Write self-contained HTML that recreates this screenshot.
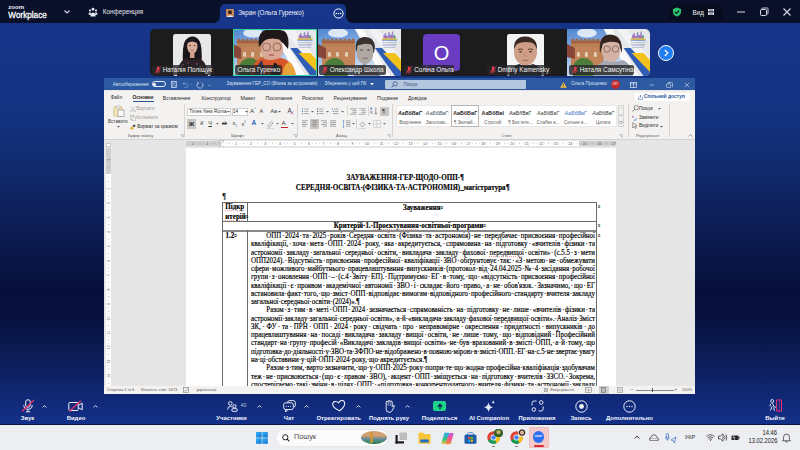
<!DOCTYPE html>
<html><head><meta charset="utf-8">
<style>
*{margin:0;padding:0;box-sizing:border-box}
html,body{width:800px;height:450px;overflow:hidden;background:#15338a;font-family:"Liberation Sans",sans-serif}
.a{position:absolute}
.t{position:absolute;white-space:nowrap;line-height:1}
</style></head><body>

<div class="a" style="left:0px;top:0px;width:800px;height:450px;background:linear-gradient(#16358a 23px,#143382 110px,#102868 180px,#0b1a4e 240px,#07103a 290px,#081240 320px,#0c1d58 360px,#13308a 424px);"></div>
<div class="a" style="left:0px;top:0px;width:800px;height:23px;background:#0a1029;"></div>
<div class="t" style="left:8.2px;top:4.3px;font-size:6.1px;color:#eef1f6;font-weight:bold;font-family:'Liberation Sans';">zoom</div>
<div class="t" style="left:8.3px;top:11.7px;font-size:8.2px;color:#fafbfd;font-weight:normal;font-family:'Liberation Sans';-webkit-text-stroke:0.3px #fafbfd">Workplace</div>
<svg class="a" style="left:63px;top:9px;" width="8" height="6" viewBox="0 0 8 6"><path d="M1.5 1.5 L4 4 L6.5 1.5" stroke="#cfd6e6" stroke-width="1.1" fill="none"/></svg>
<svg class="a" style="left:88px;top:7px;" width="10" height="10" viewBox="0 0 10 10"><g fill="#e8ecf5"><circle cx="5" cy="2.2" r="1.4"/><circle cx="2" cy="3.5" r="1.1"/><circle cx="8" cy="3.5" r="1.1"/><path d="M2.5 9.5 Q2 6 5 5.5 Q8 6 7.5 9.5Z"/><path d="M0.3 7.5 Q0.5 5 2.5 5 L3 8Z"/><path d="M9.7 7.5 Q9.5 5 7.5 5 L7 8Z"/></g></svg>
<div class="t" style="left:102.8px;top:9.3px;font-size:6.3px;color:#e6e9f2;font-weight:normal;font-family:'Liberation Sans';">Конференция</div>
<div class="a" style="left:220px;top:4px;width:126px;height:19px;background:#17368b;border-radius:5px 5px 0 0"></div>
<div class="a" style="left:214px;top:17px;width:6px;height:6px;background:radial-gradient(circle at 0 0,#0a1029 5.5px,#17368b 6px)"></div>
<div class="a" style="left:346px;top:17px;width:6px;height:6px;background:radial-gradient(circle at 100% 0,#0a1029 5.5px,#17368b 6px)"></div>
<svg class="a" style="left:226px;top:9px;" width="8" height="8" viewBox="0 0 8 8"><rect width="8" height="8" rx="1" fill="#c98a5a"/><circle cx="4" cy="3.2" r="2" fill="#3a2418"/><path d="M0.5 8 Q4 4.5 7.5 8Z" fill="#f2efe9"/></svg>
<div class="t" style="left:238px;top:9.5px;font-size:6.3px;color:#f0f3fa;font-weight:normal;font-family:'Liberation Sans';">Экран (Ольга Гуренко)</div>
<svg class="a" style="left:333px;top:8px;" width="11" height="11" viewBox="0 0 11 11"><circle cx="5.5" cy="5.5" r="4.6" stroke="#fff" stroke-width="1" fill="none"/><circle cx="3.3" cy="5.5" r="0.75" fill="#fff"/><circle cx="5.5" cy="5.5" r="0.75" fill="#fff"/><circle cx="7.7" cy="5.5" r="0.75" fill="#fff"/></svg>
<div class="a" style="left:669px;top:5px;width:54px;height:15px;background:#070c1e;border-radius:3px"></div>
<svg class="a" style="left:672px;top:6.5px;" width="10" height="10" viewBox="0 0 10 10"><path d="M5 0.5 L9 2 V5 Q9 8.3 5 9.6 Q1 8.3 1 5 V2Z" fill="#27c46a"/><path d="M3 5 L4.5 6.5 L7.2 3.6" stroke="#0a1029" stroke-width="1.2" fill="none"/></svg>
<div class="t" style="left:692.5px;top:9.5px;font-size:6.3px;color:#eef1f7;font-weight:normal;font-family:'Liberation Sans';">Вид</div>
<svg class="a" style="left:708px;top:9px;" width="6" height="6" viewBox="0 0 6 6"><g fill="#e0e4ee"><rect x="0" y="0" width="6" height="2.4"/><rect x="0" y="3.2" width="6" height="2.8"/></g><g stroke="#070c1e" stroke-width="0.6"><line x1="2" y1="0" x2="2" y2="6"/><line x1="4" y1="0" x2="4" y2="6"/></g></svg>
<svg class="a" style="left:736px;top:8px;" width="10" height="8" viewBox="0 0 10 8"><line x1="1" y1="4" x2="9" y2="4" stroke="#d8dce6" stroke-width="1"/></svg>
<svg class="a" style="left:759px;top:7px;" width="10" height="10" viewBox="0 0 10 10"><rect x="1.5" y="2.5" width="6" height="6" rx="1" stroke="#d8dce6" fill="none" stroke-width="1"/><path d="M3 2.5 V1.5 Q3 1 3.5 1 H8.5 Q9 1 9 1.5 V6.5 Q9 7 8.5 7 H7.5" stroke="#d8dce6" fill="none" stroke-width="0.9"/></svg>
<svg class="a" style="left:782px;top:7px;" width="10" height="10" viewBox="0 0 10 10"><path d="M1.5 1.5 L8.5 8.5 M8.5 1.5 L1.5 8.5" stroke="#d8dce6" stroke-width="1.1"/></svg>
<div class="a" style="left:150px;top:29px;width:500px;height:47px;background:#1c1c1c;border-radius:5px;overflow:hidden">
<svg class="a" style="left:23px;top:4.7px" width="38" height="42" viewBox="0 0 38 42"><rect width="38" height="42" rx="2.5" fill="#e8e8e8"/><path d="M10 30 Q9 12 12 7 Q15 2.5 19.5 2.5 Q24 2.5 26.5 7 Q29.5 12 28.5 30Z" fill="#19151a"/><ellipse cx="19.3" cy="12.5" rx="5.2" ry="7" fill="#d9ad9a"/><path d="M14 7 Q19 3.5 24.5 7 L24 9 Q19 6 14.5 9Z" fill="#19151a"/><rect x="17" y="18" width="4.5" height="6" fill="#cf9f8c"/><ellipse cx="17" cy="11.5" rx="1" ry="0.5" fill="#4a3030"/><ellipse cx="21.5" cy="11.5" rx="1" ry="0.5" fill="#4a3030"/><path d="M17.5 16 Q19.3 16.8 21 16" stroke="#b05a5a" stroke-width="0.7" fill="none"/><path d="M4 42 Q5 27 13 24.5 Q19.5 27 26 24.5 Q34 27 35 42Z" fill="#2a2026"/><g fill="#7a5a5e" opacity="0.8"><circle cx="10" cy="31" r="0.9"/><circle cx="15" cy="29" r="0.8"/><circle cx="24" cy="30" r="0.9"/><circle cx="29" cy="33" r="0.8"/><circle cx="12" cy="36" r="0.8"/><circle cx="20" cy="34" r="0.9"/><circle cx="27" cy="38" r="0.8"/><circle cx="17" cy="39" r="0.8"/></g></svg>
<div class="a" style="left:1.5px;top:36.2px;width:62.5px;height:9.6px;background:rgba(38,38,40,.8);border-radius:2px"></div>
<svg class="a" style="left:3.7px;top:37.3px" width="8" height="8" viewBox="0 0 8 8"><rect x="2.9" y="0.6" width="2.4" height="4.2" rx="1.2" fill="#e23c4c"/><path d="M1.9 3.8 Q1.9 6.1 4.1 6.1 Q6.2 6.1 6.2 3.8 M4.1 6.1 V7.5" stroke="#e23c4c" stroke-width="0.8" fill="none"/><line x1="1.2" y1="7.4" x2="6.8" y2="0.6" stroke="#e23c4c" stroke-width="0.9"/></svg>
<div class="t" style="left:12.7px;top:38.1px;font-size:6.4px;color:#f4f4f4">Наталія Поліщук</div>
<svg class="a" style="left:83px;top:0" width="84" height="47" viewBox="0 0 83.5 47" preserveAspectRatio="none"><defs><linearGradient id="sky83" x1="0" y1="0" x2="0.3" y2="1"><stop offset="0" stop-color="#4f86d0"/><stop offset="0.5" stop-color="#8db2e2"/><stop offset="1" stop-color="#d8e4f2"/></linearGradient></defs><rect width="83.5" height="47" fill="#e6e7ea"/><path d="M50 0 L60 0 L83.5 30 L83.5 43Z" fill="#f2f2f4"/><path d="M0 0 L37 0 L64 47 L0 47Z" fill="url(#sky83)"/><ellipse cx="20" cy="4" rx="10" ry="4.5" fill="#f2f6fb" opacity="0.85"/><path d="M37 0 L45 0 L72 47 L64 47Z" fill="#fbfbfb"/><rect x="4" y="14" width="33" height="24" fill="#c08458"/><rect x="4" y="11.5" width="33" height="3" fill="#a4623e"/><rect x="4.6" y="9.8" width="2.4" height="2" fill="#a4623e"/><rect x="8.8" y="9.8" width="2.4" height="2" fill="#a4623e"/><rect x="13.0" y="9.8" width="2.4" height="2" fill="#a4623e"/><rect x="17.200000000000003" y="9.8" width="2.4" height="2" fill="#a4623e"/><rect x="21.4" y="9.8" width="2.4" height="2" fill="#a4623e"/><rect x="25.6" y="9.8" width="2.4" height="2" fill="#a4623e"/><rect x="29.800000000000004" y="9.8" width="2.4" height="2" fill="#a4623e"/><rect x="34.0" y="9.8" width="2.4" height="2" fill="#a4623e"/><rect x="4" y="16" width="33" height="1.2" fill="#a87a4c" opacity="0.6"/><rect x="10" y="23" width="3" height="5" rx="1.4" fill="#e4d0bc"/><rect x="18" y="23" width="3" height="5" rx="1.4" fill="#e4d0bc"/><rect x="27" y="23" width="3" height="5" rx="1.4" fill="#e4d0bc"/><path d="M0 15 L8 19 L8 30 L0 28Z" fill="#86463a"/><path d="M6 47 Q4 34 12 30 Q20 27 26 34 L30 47Z" fill="#4e7c39"/><path d="M65 9.5 L65.5 6 L66.5 6 L67 4 L68 4 L68.5 7 L70 7 L70.5 3 L71.5 3 L72 6 L73.5 6 L74 2.5 L75 2.5 L75.5 7 L77 7 L77.5 9.5Z" fill="#9a86c8"/><path d="M66.5 9.5 L67 7 L68 7 L68.5 9.5Z M72.5 9.5 L73 7.5 L74 7.5 L74.5 9.5Z" fill="#d05a8a"/><path d="M75.5 9.5 L76 6 L77 6 L77.5 9.5Z" fill="#5aa06a"/><rect x="64" y="9.5" width="15" height="1.3" fill="#f1c31e"/><rect x="64" y="10.8" width="15" height="0.7" fill="#2f5cb5"/><rect x="64.0" y="13.5" width="15.0" height="0.6" fill="#7d90bb" opacity="0.75"/><rect x="64.5" y="15.0" width="14.0" height="0.6" fill="#7d90bb" opacity="0.75"/><rect x="65.0" y="16.5" width="13.0" height="0.6" fill="#7d90bb" opacity="0.75"/><rect x="65.5" y="18.0" width="12.0" height="0.6" fill="#7d90bb" opacity="0.75"/><path d="M57 19 L64 19 L83.5 40 L83.5 47 L77 47Z" fill="#2f5cb5"/><path d="M65 24 L77 24 L83.5 31 L83.5 43Z" fill="#f2c11c"/></svg>
<svg class="a" style="left:100px;top:0" width="50" height="47" viewBox="0 0 50 47"><path d="M9 18 Q7 3 16 1 Q26 -1 34 2 Q40 6 38 20 L33 14 Q24 8 14 12Z" fill="#1f1718"/><ellipse cx="22" cy="20" rx="11" ry="13" fill="#d8a895"/><path d="M11 11 Q16 4 26 5 Q34 6 36 13 Q27 8 18 10 Q14 11 11 15Z" fill="#1f1718"/><circle cx="16.5" cy="18" r="4" fill="none" stroke="#7a5a50" stroke-width="0.8"/><circle cx="27" cy="18" r="4" fill="none" stroke="#7a5a50" stroke-width="0.8"/><ellipse cx="21.5" cy="26" rx="3" ry="1" fill="#b86c6a"/><path d="M0 47 Q2 32 12 29 Q20 33 30 29 Q42 30 46 47Z" fill="#d9552a"/><path d="M4 47 Q6 36 12 31 L16 47Z" fill="#3c3552"/><path d="M20 47 L24 34 Q28 32 30 47Z" fill="#171717"/><path d="M32 47 Q34 33 40 33 Q45 38 46 47Z" fill="#e9a13a"/></svg>
<div class="a" style="left:83px;top:0;width:84px;height:47px;border:1.3px solid #35d39b"></div>
<div class="a" style="left:85px;top:36.2px;width:47px;height:9.6px;background:rgba(38,38,40,.8);border-radius:2px"></div>
<div class="t" style="left:87.5px;top:38.1px;font-size:6.4px;color:#f4f4f4">Ольга Гуренко</div>
<svg class="a" style="left:167.5px;top:0" width="83.5" height="47" viewBox="0 0 83.5 47" preserveAspectRatio="none"><defs><linearGradient id="sky167" x1="0" y1="0" x2="0.3" y2="1"><stop offset="0" stop-color="#4f86d0"/><stop offset="0.5" stop-color="#8db2e2"/><stop offset="1" stop-color="#d8e4f2"/></linearGradient></defs><rect width="83.5" height="47" fill="#e6e7ea"/><path d="M50 0 L60 0 L83.5 30 L83.5 43Z" fill="#f2f2f4"/><path d="M0 0 L37 0 L64 47 L0 47Z" fill="url(#sky167)"/><ellipse cx="20" cy="4" rx="10" ry="4.5" fill="#f2f6fb" opacity="0.85"/><path d="M37 0 L45 0 L72 47 L64 47Z" fill="#fbfbfb"/><rect x="4" y="14" width="33" height="24" fill="#c08458"/><rect x="4" y="11.5" width="33" height="3" fill="#a4623e"/><rect x="4.6" y="9.8" width="2.4" height="2" fill="#a4623e"/><rect x="8.8" y="9.8" width="2.4" height="2" fill="#a4623e"/><rect x="13.0" y="9.8" width="2.4" height="2" fill="#a4623e"/><rect x="17.200000000000003" y="9.8" width="2.4" height="2" fill="#a4623e"/><rect x="21.4" y="9.8" width="2.4" height="2" fill="#a4623e"/><rect x="25.6" y="9.8" width="2.4" height="2" fill="#a4623e"/><rect x="29.800000000000004" y="9.8" width="2.4" height="2" fill="#a4623e"/><rect x="34.0" y="9.8" width="2.4" height="2" fill="#a4623e"/><rect x="4" y="16" width="33" height="1.2" fill="#a87a4c" opacity="0.6"/><rect x="10" y="23" width="3" height="5" rx="1.4" fill="#e4d0bc"/><rect x="18" y="23" width="3" height="5" rx="1.4" fill="#e4d0bc"/><rect x="27" y="23" width="3" height="5" rx="1.4" fill="#e4d0bc"/><path d="M0 15 L8 19 L8 30 L0 28Z" fill="#86463a"/><path d="M6 47 Q4 34 12 30 Q20 27 26 34 L30 47Z" fill="#4e7c39"/><path d="M65 9.5 L65.5 6 L66.5 6 L67 4 L68 4 L68.5 7 L70 7 L70.5 3 L71.5 3 L72 6 L73.5 6 L74 2.5 L75 2.5 L75.5 7 L77 7 L77.5 9.5Z" fill="#9a86c8"/><path d="M66.5 9.5 L67 7 L68 7 L68.5 9.5Z M72.5 9.5 L73 7.5 L74 7.5 L74.5 9.5Z" fill="#d05a8a"/><path d="M75.5 9.5 L76 6 L77 6 L77.5 9.5Z" fill="#5aa06a"/><rect x="64" y="9.5" width="15" height="1.3" fill="#f1c31e"/><rect x="64" y="10.8" width="15" height="0.7" fill="#2f5cb5"/><rect x="64.0" y="13.5" width="15.0" height="0.6" fill="#7d90bb" opacity="0.75"/><rect x="64.5" y="15.0" width="14.0" height="0.6" fill="#7d90bb" opacity="0.75"/><rect x="65.0" y="16.5" width="13.0" height="0.6" fill="#7d90bb" opacity="0.75"/><rect x="65.5" y="18.0" width="12.0" height="0.6" fill="#7d90bb" opacity="0.75"/><path d="M57 19 L64 19 L83.5 40 L83.5 47 L77 47Z" fill="#2f5cb5"/><path d="M65 24 L77 24 L83.5 31 L83.5 43Z" fill="#f2c11c"/></svg>
<svg class="a" style="left:200px;top:0" width="32" height="47" viewBox="0 0 32 47"><path d="M4 47 Q5 38 14 35 Q24 37 30 47Z" fill="#8a8a8c"/><path d="M6 22 Q4 9 14 8 Q24 7 25 18 L24 24Z" fill="#3a3230"/><ellipse cx="15" cy="23" rx="8.5" ry="12" fill="#aea7a2"/><path d="M7 16 Q10 9 16 9.5 Q23 10 24 17 Q18 13 10 16Z" fill="#3a3230"/><ellipse cx="11.5" cy="21" rx="1.5" ry="0.7" fill="#5a5250"/><ellipse cx="18.5" cy="21" rx="1.5" ry="0.7" fill="#5a5250"/><path d="M12.5 29 Q15 30 17.5 29" stroke="#6a5a58" stroke-width="0.8" fill="none"/></svg>
<div class="a" style="left:168.5px;top:36.2px;width:67px;height:9.6px;background:rgba(38,38,40,.8);border-radius:2px"></div>
<svg class="a" style="left:170.7px;top:37.3px" width="8" height="8" viewBox="0 0 8 8"><rect x="2.9" y="0.6" width="2.4" height="4.2" rx="1.2" fill="#e23c4c"/><path d="M1.9 3.8 Q1.9 6.1 4.1 6.1 Q6.2 6.1 6.2 3.8 M4.1 6.1 V7.5" stroke="#e23c4c" stroke-width="0.8" fill="none"/><line x1="1.2" y1="7.4" x2="6.8" y2="0.6" stroke="#e23c4c" stroke-width="0.9"/></svg>
<div class="t" style="left:179.7px;top:38.1px;font-size:6.4px;color:#f4f4f4">Олександр Школа</div>
<div class="a" style="left:273px;top:5px;width:37px;height:37px;background:#6a3cc2;border-radius:4px"></div>
<div class="t" style="left:279px;top:13.5px;font-size:20px;color:#fff;width:25px;text-align:center">O</div>
<div class="a" style="left:253px;top:36.2px;width:51px;height:9.6px;background:rgba(38,38,40,.8);border-radius:2px"></div>
<svg class="a" style="left:255.2px;top:37.3px" width="8" height="8" viewBox="0 0 8 8"><rect x="2.9" y="0.6" width="2.4" height="4.2" rx="1.2" fill="#e23c4c"/><path d="M1.9 3.8 Q1.9 6.1 4.1 6.1 Q6.2 6.1 6.2 3.8 M4.1 6.1 V7.5" stroke="#e23c4c" stroke-width="0.8" fill="none"/><line x1="1.2" y1="7.4" x2="6.8" y2="0.6" stroke="#e23c4c" stroke-width="0.9"/></svg>
<div class="t" style="left:264.2px;top:38.1px;font-size:6.4px;color:#f4f4f4">Соліна Ольга</div>
<svg class="a" style="left:356.5px;top:4.7px" width="37.3" height="42" viewBox="0 0 37.3 42"><rect width="37.3" height="42" rx="2.5" fill="#f4f4f4"/><path d="M2 42 Q4 32 12 30 Q19 33 26 30 Q34 32 35 42Z" fill="#2c2e34"/><ellipse cx="18.5" cy="18" rx="11.5" ry="13.5" fill="#cf9e86"/><path d="M7 16 Q6 3 18 2.5 Q31 3 30 16 Q29 10 24 8.5 Q16 7 10 10 Q8 12 7 16Z" fill="#3a2a22"/><path d="M11 15.5 Q13.5 14.5 16 15.5 M21 15.5 Q23.5 14.5 26 15.5" stroke="#4a3028" stroke-width="0.9" fill="none"/><ellipse cx="13.5" cy="17.8" rx="1.6" ry="0.8" fill="#5a3a30"/><ellipse cx="23.5" cy="17.8" rx="1.6" ry="0.8" fill="#5a3a30"/><path d="M18.5 18 L17.5 22.5 L19.5 22.5" stroke="#b07a64" stroke-width="0.6" fill="none"/><path d="M15.5 26 Q18.5 27 21.5 26" stroke="#9a5a50" stroke-width="0.9" fill="none"/></svg>
<div class="a" style="left:336.5px;top:36.2px;width:64px;height:9.6px;background:rgba(38,38,40,.8);border-radius:2px"></div>
<svg class="a" style="left:338.7px;top:37.3px" width="8" height="8" viewBox="0 0 8 8"><rect x="2.9" y="0.6" width="2.4" height="4.2" rx="1.2" fill="#e23c4c"/><path d="M1.9 3.8 Q1.9 6.1 4.1 6.1 Q6.2 6.1 6.2 3.8 M4.1 6.1 V7.5" stroke="#e23c4c" stroke-width="0.8" fill="none"/><line x1="1.2" y1="7.4" x2="6.8" y2="0.6" stroke="#e23c4c" stroke-width="0.9"/></svg>
<div class="t" style="left:347.7px;top:38.1px;font-size:6.4px;color:#f4f4f4">Dmitriy Kamensky</div>
<svg class="a" style="left:417px;top:0" width="83" height="47" viewBox="0 0 83.5 47" preserveAspectRatio="none"><defs><linearGradient id="sky417" x1="0" y1="0" x2="0.3" y2="1"><stop offset="0" stop-color="#4f86d0"/><stop offset="0.5" stop-color="#8db2e2"/><stop offset="1" stop-color="#d8e4f2"/></linearGradient></defs><rect width="83.5" height="47" fill="#e6e7ea"/><path d="M50 0 L60 0 L83.5 30 L83.5 43Z" fill="#f2f2f4"/><path d="M0 0 L37 0 L64 47 L0 47Z" fill="url(#sky417)"/><ellipse cx="20" cy="4" rx="10" ry="4.5" fill="#f2f6fb" opacity="0.85"/><path d="M37 0 L45 0 L72 47 L64 47Z" fill="#fbfbfb"/><rect x="4" y="14" width="33" height="24" fill="#c08458"/><rect x="4" y="11.5" width="33" height="3" fill="#a4623e"/><rect x="4.6" y="9.8" width="2.4" height="2" fill="#a4623e"/><rect x="8.8" y="9.8" width="2.4" height="2" fill="#a4623e"/><rect x="13.0" y="9.8" width="2.4" height="2" fill="#a4623e"/><rect x="17.200000000000003" y="9.8" width="2.4" height="2" fill="#a4623e"/><rect x="21.4" y="9.8" width="2.4" height="2" fill="#a4623e"/><rect x="25.6" y="9.8" width="2.4" height="2" fill="#a4623e"/><rect x="29.800000000000004" y="9.8" width="2.4" height="2" fill="#a4623e"/><rect x="34.0" y="9.8" width="2.4" height="2" fill="#a4623e"/><rect x="4" y="16" width="33" height="1.2" fill="#a87a4c" opacity="0.6"/><rect x="10" y="23" width="3" height="5" rx="1.4" fill="#e4d0bc"/><rect x="18" y="23" width="3" height="5" rx="1.4" fill="#e4d0bc"/><rect x="27" y="23" width="3" height="5" rx="1.4" fill="#e4d0bc"/><path d="M0 15 L8 19 L8 30 L0 28Z" fill="#86463a"/><path d="M6 47 Q4 34 12 30 Q20 27 26 34 L30 47Z" fill="#4e7c39"/><path d="M65 9.5 L65.5 6 L66.5 6 L67 4 L68 4 L68.5 7 L70 7 L70.5 3 L71.5 3 L72 6 L73.5 6 L74 2.5 L75 2.5 L75.5 7 L77 7 L77.5 9.5Z" fill="#9a86c8"/><path d="M66.5 9.5 L67 7 L68 7 L68.5 9.5Z M72.5 9.5 L73 7.5 L74 7.5 L74.5 9.5Z" fill="#d05a8a"/><path d="M75.5 9.5 L76 6 L77 6 L77.5 9.5Z" fill="#5aa06a"/><rect x="64" y="9.5" width="15" height="1.3" fill="#f1c31e"/><rect x="64" y="10.8" width="15" height="0.7" fill="#2f5cb5"/><rect x="64.0" y="13.5" width="15.0" height="0.6" fill="#7d90bb" opacity="0.75"/><rect x="64.5" y="15.0" width="14.0" height="0.6" fill="#7d90bb" opacity="0.75"/><rect x="65.0" y="16.5" width="13.0" height="0.6" fill="#7d90bb" opacity="0.75"/><rect x="65.5" y="18.0" width="12.0" height="0.6" fill="#7d90bb" opacity="0.75"/><path d="M57 19 L64 19 L83.5 40 L83.5 47 L77 47Z" fill="#2f5cb5"/><path d="M65 24 L77 24 L83.5 31 L83.5 43Z" fill="#f2c11c"/></svg>
<svg class="a" style="left:443px;top:0" width="40" height="47" viewBox="0 0 40 47"><path d="M0 47 Q2 34 14 31 Q22 34 30 31 Q38 34 40 47Z" fill="#a4a8b4"/><path d="M7 24 Q5 6 17 5.5 Q30 6 29 24 L26 16 Q18 10 10 16Z" fill="#33241f"/><ellipse cx="18" cy="21" rx="9.5" ry="12" fill="#d4b2a4"/><path d="M8.5 15 Q12 7 19 7.5 Q27 8 28 15 Q20 11 12 14Z" fill="#33241f"/><circle cx="14" cy="20" r="3.2" fill="none" stroke="#6a5550" stroke-width="0.7"/><circle cx="22.5" cy="20" r="3.2" fill="none" stroke="#6a5550" stroke-width="0.7"/></svg>
<div class="a" style="left:418.5px;top:36.2px;width:65px;height:9.6px;background:rgba(38,38,40,.8);border-radius:2px"></div>
<svg class="a" style="left:420.7px;top:37.3px" width="8" height="8" viewBox="0 0 8 8"><rect x="2.9" y="0.6" width="2.4" height="4.2" rx="1.2" fill="#e23c4c"/><path d="M1.9 3.8 Q1.9 6.1 4.1 6.1 Q6.2 6.1 6.2 3.8 M4.1 6.1 V7.5" stroke="#e23c4c" stroke-width="0.8" fill="none"/><line x1="1.2" y1="7.4" x2="6.8" y2="0.6" stroke="#e23c4c" stroke-width="0.9"/></svg>
<div class="t" style="left:429.7px;top:38.1px;font-size:6.4px;color:#f4f4f4">Наталя Самсутіна</div>
</div>
<div class="a" style="left:657.5px;top:44.5px;width:16px;height:16px;border-radius:50%;background:#1f7ef2;border:1.3px solid #fff"></div>
<svg class="a" style="left:662px;top:49px;" width="8" height="8" viewBox="0 0 8 8"><path d="M2.8 1 L5.8 4 L2.8 7" stroke="#fff" stroke-width="1.2" fill="none"/></svg>
<div class="a" style="left:104px;top:78px;width:591px;height:316px;background:#e6e6e6;"></div>
<div class="a" style="left:104px;top:77.8px;width:591px;height:12.7px;background:#2c59a0;"></div>
<div class="t" style="left:112.8px;top:83.1px;font-size:4.65px;color:#dbe4f2;font-weight:normal;font-family:'Liberation Sans';">Автозбереження</div>
<div class="a" style="left:151.5px;top:81.2px;width:14.8px;height:6px;border:0.6px solid #e8eef8;border-radius:3px;background:#2c59a0"></div>
<div class="a" style="left:152.9px;top:82.5px;width:3.4px;height:3.4px;background:#fff;border-radius:50%"></div>
<svg class="a" style="left:171px;top:81px;" width="6" height="7" viewBox="0 0 6 7"><rect x="0.4" y="0.4" width="5.2" height="6.2" stroke="#d0dcef" stroke-width="0.7" fill="none"/><rect x="1.5" y="0.5" width="3" height="2" stroke="#d0dcef" stroke-width="0.5" fill="none"/><rect x="1.3" y="4" width="3.4" height="2.6" stroke="#d0dcef" stroke-width="0.5" fill="none"/></svg>
<svg class="a" style="left:181px;top:81px;" width="8" height="7" viewBox="0 0 8 7"><path d="M2 2.5 H5 Q7 2.5 7 4.5 Q7 6.5 5 6.5 H3.5 M2 2.5 L3.5 1 M2 2.5 L3.5 4" stroke="#7d9ccc" stroke-width="0.7" fill="none"/></svg>
<svg class="a" style="left:190px;top:83px;" width="3" height="3" viewBox="0 0 3 3"><path d="M0.3 0.8 L1.5 2 L2.7 0.8" stroke="#7d9ccc" stroke-width="0.5" fill="none"/></svg>
<svg class="a" style="left:195.5px;top:81px;" width="8" height="8" viewBox="0 0 8 8"><path d="M5.6 1.6 A3 3 0 1 1 2.2 1.8" stroke="#dfe7f3" stroke-width="0.7" fill="none"/><path d="M1.2 0.9 L2.6 1.8 L1.6 3.1" stroke="#dfe7f3" stroke-width="0.6" fill="none"/></svg>
<svg class="a" style="left:208px;top:83.5px;" width="3" height="3" viewBox="0 0 3 3"><path d="M0.3 0.6 L1.5 1.9 L2.7 0.6" stroke="#dfe7f3" stroke-width="0.5" fill="none"/></svg>
<div class="t" style="left:226.5px;top:82.2px;font-size:4.45px;color:#dbe4f2;font-weight:normal;font-family:'Liberation Sans';">Зауваження ГЕР_СО (Фізика за астрономія)</div>
<div class="t" style="left:319.8px;top:82.2px;font-size:4.45px;color:#dbe4f2;font-weight:normal;font-family:'Liberation Sans';">·</div>
<div class="t" style="left:324.5px;top:82.2px;font-size:4.45px;color:#dbe4f2;font-weight:normal;font-family:'Liberation Sans';">Збережено у цей ПК</div>
<svg class="a" style="left:370px;top:83px;" width="4" height="3" viewBox="0 0 4 3"><path d="M0 0 L4 0 L2 2.5Z" fill="#e6edf7"/></svg>
<div class="a" style="left:384.7px;top:80px;width:141.3px;height:9px;background:#b5c6df;border-radius:1px"></div>
<svg class="a" style="left:390.5px;top:81px;" width="7" height="7" viewBox="0 0 7 7"><circle cx="4.2" cy="2.8" r="2.1" stroke="#2b4a80" stroke-width="0.7" fill="none"/><line x1="2.7" y1="4.3" x2="0.6" y2="6.4" stroke="#2b4a80" stroke-width="0.8"/></svg>
<div class="t" style="left:403.5px;top:82.8px;font-size:4.6px;color:#3b5380;font-weight:normal;font-family:'Liberation Sans';">Пошук</div>
<svg class="a" style="left:559.5px;top:81.5px;" width="7" height="6" viewBox="0 0 7 6"><path d="M3.5 0.3 L6.8 5.7 H0.2Z" fill="#f5c242"/><rect x="3.2" y="2" width="0.6" height="2" fill="#333"/><rect x="3.2" y="4.5" width="0.6" height="0.6" fill="#333"/></svg>
<div class="t" style="left:571px;top:82.3px;font-size:4.75px;color:#dbe4f2;font-weight:normal;font-family:'Liberation Sans';">Ольга Проценко</div>
<div class="a" style="left:611px;top:80.2px;width:9px;height:9px;border-radius:50%;background:#c42a2e"></div>
<div class="t" style="left:612.3px;top:83px;font-size:3.6px;color:#fff;font-weight:normal;font-family:'Liberation Sans';">ОП</div>
<svg class="a" style="left:630px;top:82.2px;" width="7" height="6" viewBox="0 0 7 6"><rect x="0.4" y="0.4" width="6.2" height="5.2" stroke="#e0e8f4" stroke-width="0.7" fill="none"/><line x1="3.5" y1="0.4" x2="3.5" y2="5.6" stroke="#e0e8f4" stroke-width="0.6"/><line x1="0.4" y1="2" x2="6.6" y2="2" stroke="#e0e8f4" stroke-width="0.6"/></svg>
<svg class="a" style="left:648.5px;top:84px;" width="6" height="2" viewBox="0 0 6 2"><line x1="0.5" y1="1" x2="5" y2="1" stroke="#d6e0ee" stroke-width="0.6"/></svg>
<svg class="a" style="left:665.5px;top:82px;" width="7" height="7" viewBox="0 0 7 7"><rect x="0.5" y="1.8" width="4.2" height="3.6" rx="0.8" stroke="#d6e0ee" stroke-width="0.7" fill="none"/><path d="M1.8 1.6 V1.2 Q1.8 0.5 2.5 0.5 H5.8 Q6.5 0.5 6.5 1.2 V4.5 Q6.5 5.2 5.8 5.2" stroke="#e0e8f4" stroke-width="0.6" fill="none"/></svg>
<svg class="a" style="left:683.5px;top:81.8px;" width="6" height="6" viewBox="0 0 6 6"><path d="M0.8 0.8 L5.2 5.2 M5.2 0.8 L0.8 5.2" stroke="#d6e0ee" stroke-width="0.6"/></svg>
<div class="a" style="left:104px;top:90.5px;width:591px;height:48.5px;background:#f3f2f1;"></div>
<div class="a" style="left:104px;top:139px;width:591px;height:0.8px;background:#d4d2d0;"></div>
<div class="t" style="left:110.7px;top:96.125px;font-size:4.65px;color:#2a2a2a;font-weight:normal;font-family:'Liberation Sans';">Файл</div>
<div class="t" style="left:132.5px;top:96.02px;font-size:4.86px;color:#262626;font-weight:bold;font-family:'Liberation Sans';">Основне</div>
<div class="t" style="left:162.8px;top:95.94999999999999px;font-size:5.0px;color:#2a2a2a;font-weight:normal;font-family:'Liberation Sans';">Вставлення</div>
<div class="t" style="left:201.5px;top:95.875px;font-size:5.15px;color:#2a2a2a;font-weight:normal;font-family:'Liberation Sans';">Конструктор</div>
<div class="t" style="left:240.5px;top:95.8px;font-size:5.3px;color:#2a2a2a;font-weight:normal;font-family:'Liberation Sans';">Макет</div>
<div class="t" style="left:265.5px;top:95.85px;font-size:5.2px;color:#2a2a2a;font-weight:normal;font-family:'Liberation Sans';">Посилання</div>
<div class="t" style="left:302px;top:95.94999999999999px;font-size:5.0px;color:#2a2a2a;font-weight:normal;font-family:'Liberation Sans';">Розсилки</div>
<div class="t" style="left:333.6px;top:95.89999999999999px;font-size:5.1px;color:#2a2a2a;font-weight:normal;font-family:'Liberation Sans';">Рецензування</div>
<div class="t" style="left:377px;top:95.875px;font-size:5.15px;color:#2a2a2a;font-weight:normal;font-family:'Liberation Sans';">Подання</div>
<div class="t" style="left:408px;top:95.85px;font-size:5.2px;color:#2a2a2a;font-weight:normal;font-family:'Liberation Sans';">Довідка</div>
<div class="a" style="left:132.5px;top:101px;width:21px;height:1.1px;background:#2b579a;"></div>
<div class="a" style="left:635px;top:93px;width:55px;height:8px;background:#ffffff;border-radius:1px"></div>
<svg class="a" style="left:637.5px;top:94.5px;" width="5" height="5" viewBox="0 0 5 5"><path d="M0.5 2 V4.5 H4.5 V2 M2.5 0.3 V3 M1.3 1.4 L2.5 0.3 L3.7 1.4" stroke="#2b579a" stroke-width="0.5" fill="none"/></svg>
<div class="t" style="left:643.7px;top:95px;font-size:4.9px;color:#2b579a;font-weight:bold;font-family:'Liberation Sans';">Спільний доступ</div>
<svg class="a" style="left:112.5px;top:104.5px;" width="12" height="12" viewBox="0 0 12 12"><rect x="1" y="2" width="8" height="9" rx="0.5" fill="#f6e7c0" stroke="#c9a24a" stroke-width="0.6"/><rect x="3" y="1" width="4" height="2" rx="0.5" fill="#fff" stroke="#8c8c8c" stroke-width="0.5"/><rect x="5" y="5" width="6" height="6.5" fill="#fff" stroke="#7a7a7a" stroke-width="0.6"/></svg>
<div class="t" style="left:108px;top:119.8px;font-size:4.6px;color:#3b3a39;font-weight:normal;font-family:'Liberation Sans';">Вставити</div>
<svg class="a" style="left:116.5px;top:125.5px;" width="3" height="2" viewBox="0 0 3 2"><path d="M0 0 L3 0 L1.5 1.6Z" fill="#555"/></svg>
<svg class="a" style="left:129.5px;top:106px;" width="6" height="6" viewBox="0 0 6 6"><path d="M1 0.5 L5 5.5 M5 0.5 L1 5.5" stroke="#a6a6a6" stroke-width="0.5"/><circle cx="1.3" cy="5" r="0.8" stroke="#a6a6a6" stroke-width="0.4" fill="none"/><circle cx="4.7" cy="5" r="0.8" stroke="#a6a6a6" stroke-width="0.4" fill="none"/></svg>
<div class="t" style="left:136.2px;top:107.2px;font-size:4.6px;color:#a19f9d;font-weight:normal;font-family:'Liberation Sans';">Вирізати</div>
<svg class="a" style="left:129.5px;top:114.8px;" width="6" height="6" viewBox="0 0 6 6"><rect x="0.5" y="0.5" width="3.5" height="4" stroke="#a6a6a6" stroke-width="0.5" fill="none"/><rect x="2" y="1.8" width="3.5" height="4" stroke="#a6a6a6" stroke-width="0.5" fill="#f3f2f1"/></svg>
<div class="t" style="left:136.2px;top:115.8px;font-size:4.6px;color:#a19f9d;font-weight:normal;font-family:'Liberation Sans';">Копіювати</div>
<svg class="a" style="left:129px;top:123.8px;" width="7" height="6" viewBox="0 0 7 6"><path d="M1 4.5 L3 2 L5 4 L3 6Z" fill="#e8b448"/><path d="M3.5 1.5 L6 0.5 L6.5 2.5 L4.5 3" fill="#3a3a3a"/></svg>
<div class="t" style="left:137px;top:124.8px;font-size:4.6px;color:#262626;font-weight:normal;font-family:'Liberation Sans';">Формат за зразком</div>
<div class="t" style="left:128px;top:134.3px;font-size:3.95px;color:#5a5856;font-weight:normal;font-family:'Liberation Sans';">Буфер обміну</div>
<svg class="a" style="left:179.5px;top:134px;" width="4" height="4" viewBox="0 0 4 4"><path d="M0.3 0.3 H3.2 V3.2 M1.2 1.2 L3.2 3.2" stroke="#7a7a7a" stroke-width="0.45" fill="none"/></svg>
<div class="a" style="left:183.5px;top:104px;width:0.6px;height:33px;background:#d6d4d2;"></div>
<div class="a" style="left:187px;top:107.5px;width:43.5px;height:8.2px;background:#fff;border:0.5px solid #d2d0ce;overflow:hidden"><div class="t" style="left:1.2px;top:1.6px;font-size:4.75px;color:#303030">Times New Roman</div><div class="a" style="left:38.5px;top:0;width:5px;height:8px;background:#fff"></div></div>
<svg class="a" style="left:226.5px;top:110.5px;" width="3" height="2" viewBox="0 0 3 2"><path d="M0 0 L3 0 L1.5 1.5Z" fill="#555"/></svg>
<div class="a" style="left:231.7px;top:107.5px;width:16.3px;height:8.2px;background:#ffffff;border:0.5px solid #d2d0ce"></div>
<div class="t" style="left:233px;top:110px;font-size:4.6px;color:#262626;font-weight:normal;font-family:'Liberation Sans';">14</div>
<svg class="a" style="left:244.5px;top:110.5px;" width="3" height="2" viewBox="0 0 3 2"><path d="M0 0 L3 0 L1.5 1.5Z" fill="#555"/></svg>
<div class="t" style="left:250px;top:107.5px;font-size:6.2px;color:#3b3a39;font-weight:normal;font-family:'Liberation Sans';">A<sup style='font-size:3px'>^</sup></div>
<div class="t" style="left:259.5px;top:107.8px;font-size:5.6px;color:#3b3a39;font-weight:normal;font-family:'Liberation Sans';">A<sup style='font-size:3px'>ˇ</sup></div>
<div class="t" style="left:270.5px;top:108.5px;font-size:5.4px;color:#3b3a39;font-weight:normal;font-family:'Liberation Sans';">Aa</div>
<svg class="a" style="left:277.5px;top:110.5px;" width="3" height="2" viewBox="0 0 3 2"><path d="M0 0 L3 0 L1.5 1.5Z" fill="#555"/></svg>
<div class="t" style="left:287.5px;top:107.6px;font-size:6.4px;color:#3b3a39;font-weight:normal;font-family:'Liberation Sans';">A</div>
<svg class="a" style="left:290px;top:111px;" width="4" height="4" viewBox="0 0 4 4"><path d="M0.3 0.3 L3.5 3.5 M3.5 0.3 L0.3 3.5" stroke="#b4469a" stroke-width="0.6"/></svg>
<div class="a" style="left:187.3px;top:119px;width:8.7px;height:9.5px;background:#c8c6c4;"></div>
<div class="t" style="left:188.8px;top:120.8px;font-size:6px;color:#262626;font-weight:bold;font-family:'Liberation Sans';">Ж</div>
<div class="t" style="left:200.3px;top:120.8px;font-size:5.6px;color:#3b3a39;font-weight:normal;font-family:'Liberation Sans';font-style:italic">К</div>
<div class="t" style="left:208.3px;top:120.8px;font-size:5.6px;color:#3b3a39;font-weight:normal;font-family:'Liberation Sans';text-decoration:underline">Ч</div>
<svg class="a" style="left:216px;top:123px;" width="3" height="2" viewBox="0 0 3 2"><path d="M0 0 L3 0 L1.5 1.5Z" fill="#666"/></svg>
<div class="t" style="left:222px;top:121.8px;font-size:4.5px;color:#3b3a39;font-weight:normal;font-family:'Liberation Sans';text-decoration:line-through;text-decoration-thickness:0.4px">ab</div>
<div class="t" style="left:232.5px;top:120.8px;font-size:5.6px;color:#3b3a39;font-weight:normal;font-family:'Liberation Sans';">x<sub style='font-size:3px'>1</sub></div>
<div class="t" style="left:241.5px;top:120.5px;font-size:5.6px;color:#3b3a39;font-weight:normal;font-family:'Liberation Sans';">x<sup style='font-size:3px'>1</sup></div>
<div class="t" style="left:251.5px;top:120.3px;font-size:6.5px;color:#2f6cc4;font-weight:bold;font-family:'Liberation Sans';">A</div>
<svg class="a" style="left:260.5px;top:123px;" width="3" height="2" viewBox="0 0 3 2"><path d="M0 0 L3 0 L1.5 1.5Z" fill="#666"/></svg>
<svg class="a" style="left:266px;top:119.5px;" width="8" height="9" viewBox="0 0 8 9"><path d="M1.5 6 L5.5 1.5 L7 3 L3 7.5Z" stroke="#666" stroke-width="0.5" fill="none"/><rect x="0" y="8" width="8" height="1" fill="#d8d8d8"/></svg>
<svg class="a" style="left:275.5px;top:123px;" width="3" height="2" viewBox="0 0 3 2"><path d="M0 0 L3 0 L1.5 1.5Z" fill="#666"/></svg>
<div class="t" style="left:281.5px;top:120.3px;font-size:6.2px;color:#3b3a39;font-weight:normal;font-family:'Liberation Sans';">A</div>
<div class="a" style="left:281px;top:127px;width:7px;height:1.3px;background:#c0282e;"></div>
<svg class="a" style="left:290.5px;top:123px;" width="3" height="2" viewBox="0 0 3 2"><path d="M0 0 L3 0 L1.5 1.5Z" fill="#666"/></svg>
<div class="t" style="left:231px;top:134.3px;font-size:3.95px;color:#5a5856;font-weight:normal;font-family:'Liberation Sans';">Шрифт</div>
<svg class="a" style="left:293px;top:134px;" width="4" height="4" viewBox="0 0 4 4"><path d="M0.3 0.3 H3.2 V3.2 M1.2 1.2 L3.2 3.2" stroke="#7a7a7a" stroke-width="0.45" fill="none"/></svg>
<div class="a" style="left:297.3px;top:104px;width:0.6px;height:33px;background:#d6d4d2;"></div>
<svg class="a" style="left:302px;top:107.5px;" width="7" height="7" viewBox="0 0 7 7"><rect x="0" y="0.6" width="1" height="1" fill="#2f6cc4"/><line x1="2.3" y1="1.0" x2="6.5" y2="1.0" stroke="#666" stroke-width="0.55"/><rect x="0" y="2.9" width="1" height="1" fill="#2f6cc4"/><line x1="2.3" y1="3.3" x2="6.5" y2="3.3" stroke="#666" stroke-width="0.55"/><rect x="0" y="5.199999999999999" width="1" height="1" fill="#2f6cc4"/><line x1="2.3" y1="5.6" x2="6.5" y2="5.6" stroke="#666" stroke-width="0.55"/></svg>
<svg class="a" style="left:311px;top:110.5px;" width="3" height="2" viewBox="0 0 3 2"><path d="M0 0 L3 0 L1.5 1.5Z" fill="#666"/></svg>
<svg class="a" style="left:317px;top:107.5px;" width="7" height="7" viewBox="0 0 7 7"><rect x="0" y="0.5" width="1.2" height="1.2" fill="#666"/><line x1="2.3" y1="1.0" x2="6.5" y2="1.0" stroke="#666" stroke-width="0.55"/><rect x="0" y="2.8" width="1.2" height="1.2" fill="#666"/><line x1="2.3" y1="3.3" x2="6.5" y2="3.3" stroke="#666" stroke-width="0.55"/><rect x="0" y="5.1" width="1.2" height="1.2" fill="#666"/><line x1="2.3" y1="5.6" x2="6.5" y2="5.6" stroke="#666" stroke-width="0.55"/></svg>
<svg class="a" style="left:326px;top:110.5px;" width="3" height="2" viewBox="0 0 3 2"><path d="M0 0 L3 0 L1.5 1.5Z" fill="#666"/></svg>
<svg class="a" style="left:332px;top:107.5px;" width="7" height="7" viewBox="0 0 7 7"><rect x="0.0" y="0.6" width="1" height="1" fill="#2f6cc4"/><line x1="2.3" y1="1.0" x2="6.5" y2="1.0" stroke="#666" stroke-width="0.55"/><rect x="0.8" y="2.9" width="1" height="1" fill="#2f6cc4"/><line x1="2.3" y1="3.3" x2="6.5" y2="3.3" stroke="#666" stroke-width="0.55"/><rect x="1.6" y="5.199999999999999" width="1" height="1" fill="#2f6cc4"/><line x1="2.3" y1="5.6" x2="6.5" y2="5.6" stroke="#666" stroke-width="0.55"/></svg>
<svg class="a" style="left:341px;top:110.5px;" width="3" height="2" viewBox="0 0 3 2"><path d="M0 0 L3 0 L1.5 1.5Z" fill="#666"/></svg>
<div class="a" style="left:346.5px;top:106px;width:0.5px;height:10px;background:#d6d4d2;"></div>
<svg class="a" style="left:349.8px;top:107.8px;" width="7" height="8" viewBox="0 0 7 8"><line x1="0" y1="0.8" x2="6.5" y2="0.8" stroke="#666" stroke-width="0.55"/><line x1="2.5" y1="2.6" x2="6.5" y2="2.6" stroke="#666" stroke-width="0.55"/><line x1="2.5" y1="4.4" x2="6.5" y2="4.4" stroke="#666" stroke-width="0.55"/><line x1="0" y1="6.2" x2="6.5" y2="6.2" stroke="#666" stroke-width="0.55"/></svg>
<svg class="a" style="left:359px;top:107.8px;" width="7" height="8" viewBox="0 0 7 8"><line x1="0" y1="0.8" x2="6.5" y2="0.8" stroke="#666" stroke-width="0.55"/><line x1="2.5" y1="2.6" x2="6.5" y2="2.6" stroke="#666" stroke-width="0.55"/><line x1="2.5" y1="4.4" x2="6.5" y2="4.4" stroke="#666" stroke-width="0.55"/><line x1="0" y1="6.2" x2="6.5" y2="6.2" stroke="#666" stroke-width="0.55"/></svg>
<div class="a" style="left:367.5px;top:106px;width:0.5px;height:10px;background:#d6d4d2;"></div>
<svg class="a" style="left:369.5px;top:107px;" width="8" height="8" viewBox="0 0 8 8"><text x="0" y="3.4" font-size="3.3" fill="#2f6cc4" font-family="Liberation Sans">A</text><text x="0" y="7.4" font-size="3.3" fill="#444" font-family="Liberation Sans">Я</text><path d="M5.8 0.5 V7 M4.6 5.8 L5.8 7.2 L7 5.8" stroke="#444" stroke-width="0.5" fill="none"/></svg>
<div class="a" style="left:380px;top:106.7px;width:8.7px;height:9px;background:#c8c6c4;"></div>
<div class="t" style="left:382px;top:108.2px;font-size:6px;color:#262626;font-weight:normal;font-family:'Liberation Sans';">¶</div>
<svg class="a" style="left:302px;top:120px;" width="7" height="8" viewBox="0 0 7 8"><line x1="0" y1="0.8" x2="6" y2="0.8" stroke="#666" stroke-width="0.55"/><line x1="0" y1="2.6" x2="4" y2="2.6" stroke="#666" stroke-width="0.55"/><line x1="0" y1="4.4" x2="6" y2="4.4" stroke="#666" stroke-width="0.55"/><line x1="0" y1="6.2" x2="4" y2="6.2" stroke="#666" stroke-width="0.55"/></svg>
<div class="a" style="left:310px;top:119px;width:8.7px;height:9.5px;background:#c8c6c4;"></div>
<svg class="a" style="left:311px;top:120px;" width="7" height="8" viewBox="0 0 7 8"><line x1="0.5" y1="0.8" x2="6.5" y2="0.8" stroke="#666" stroke-width="0.55"/><line x1="1.5" y1="2.6" x2="5.5" y2="2.6" stroke="#666" stroke-width="0.55"/><line x1="0.5" y1="4.4" x2="6.5" y2="4.4" stroke="#666" stroke-width="0.55"/><line x1="1.5" y1="6.2" x2="5.5" y2="6.2" stroke="#666" stroke-width="0.55"/></svg>
<svg class="a" style="left:321px;top:120px;" width="7" height="8" viewBox="0 0 7 8"><line x1="0" y1="0.8" x2="6" y2="0.8" stroke="#666" stroke-width="0.55"/><line x1="2" y1="2.6" x2="6" y2="2.6" stroke="#666" stroke-width="0.55"/><line x1="0" y1="4.4" x2="6" y2="4.4" stroke="#666" stroke-width="0.55"/><line x1="2" y1="6.2" x2="6" y2="6.2" stroke="#666" stroke-width="0.55"/></svg>
<svg class="a" style="left:330px;top:120px;" width="7" height="8" viewBox="0 0 7 8"><line x1="0" y1="0.8" x2="6" y2="0.8" stroke="#666" stroke-width="0.55"/><line x1="0" y1="2.6" x2="6" y2="2.6" stroke="#666" stroke-width="0.55"/><line x1="0" y1="4.4" x2="6" y2="4.4" stroke="#666" stroke-width="0.55"/><line x1="0" y1="6.2" x2="6" y2="6.2" stroke="#666" stroke-width="0.55"/></svg>
<svg class="a" style="left:342.5px;top:120px;" width="8" height="8" viewBox="0 0 8 8"><line x1="3" y1="0.8" x2="7.5" y2="0.8" stroke="#666" stroke-width="0.55"/><line x1="3" y1="2.6" x2="7.5" y2="2.6" stroke="#666" stroke-width="0.55"/><line x1="3" y1="4.4" x2="7.5" y2="4.4" stroke="#666" stroke-width="0.55"/><line x1="3" y1="6.2" x2="7.5" y2="6.2" stroke="#666" stroke-width="0.55"/></svg>
<svg class="a" style="left:341.5px;top:119.5px;" width="3" height="8" viewBox="0 0 3 8"><path d="M1.5 0.3 V7.7 M0.4 1.4 L1.5 0.3 L2.6 1.4 M0.4 6.6 L1.5 7.7 L2.6 6.6" stroke="#2f6cc4" stroke-width="0.45" fill="none"/></svg>
<svg class="a" style="left:351.5px;top:123px;" width="3" height="2" viewBox="0 0 3 2"><path d="M0 0 L3 0 L1.5 1.5Z" fill="#666"/></svg>
<div class="a" style="left:355.5px;top:119px;width:0.5px;height:10px;background:#d6d4d2;"></div>
<svg class="a" style="left:358.5px;top:119.5px;" width="7" height="9" viewBox="0 0 7 9"><path d="M1 4.5 L3.5 2 L6 4.5 L3.5 7Z" stroke="#555" stroke-width="0.5" fill="none"/><rect x="0" y="8" width="7" height="1" fill="#d8d8d8"/></svg>
<svg class="a" style="left:367.5px;top:123px;" width="3" height="2" viewBox="0 0 3 2"><path d="M0 0 L3 0 L1.5 1.5Z" fill="#666"/></svg>
<svg class="a" style="left:372.7px;top:119.5px;" width="8" height="8" viewBox="0 0 8 8"><rect x="0.5" y="0.5" width="7" height="7" stroke="#888" stroke-width="0.45" fill="none" stroke-dasharray="0.8 0.6"/><line x1="4" y1="0.5" x2="4" y2="7.5" stroke="#888" stroke-width="0.45" stroke-dasharray="0.8 0.6"/><line x1="0.5" y1="4" x2="7.5" y2="4" stroke="#888" stroke-width="0.45" stroke-dasharray="0.8 0.6"/></svg>
<svg class="a" style="left:382.5px;top:123px;" width="3" height="2" viewBox="0 0 3 2"><path d="M0 0 L3 0 L1.5 1.5Z" fill="#666"/></svg>
<div class="t" style="left:336px;top:134.3px;font-size:3.95px;color:#5a5856;font-weight:normal;font-family:'Liberation Sans';">Абзац</div>
<svg class="a" style="left:387px;top:134px;" width="4" height="4" viewBox="0 0 4 4"><path d="M0.3 0.3 H3.2 V3.2 M1.2 1.2 L3.2 3.2" stroke="#7a7a7a" stroke-width="0.45" fill="none"/></svg>
<div class="a" style="left:391.5px;top:104px;width:0.6px;height:33px;background:#d6d4d2;"></div>
<div class="a" style="left:395.7px;top:104.5px;width:221.5px;height:22.5px;background:#ffffff;border:0.5px solid #ebe9e7"></div>
<div class="t" style="left:396.5px;top:111px;width:27px;text-align:center;font-size:5.3px;font-style:italic;font-weight:bold;color:#262626">AaБбВвГ</div>
<div class="t" style="left:396.5px;top:121.1px;width:27px;text-align:center;font-size:4.5px;color:#605e5c">Виділення</div>
<div class="t" style="left:424.1px;top:111px;width:27px;text-align:center;font-size:5.3px;font-style:italic;color:#44546a">AaБбВвГ:</div>
<div class="t" style="left:424.1px;top:121.1px;width:27px;text-align:center;font-size:4.5px;color:#605e5c">Заголово...</div>
<div class="a" style="left:451.2px;top:105px;width:27.5px;height:21.5px;border:1px solid #b8b6b4"></div>
<div class="t" style="left:451.7px;top:111px;width:27px;text-align:center;font-size:5.3px;font-weight:bold;color:#262626">AaБбВвГ</div>
<div class="t" style="left:451.7px;top:121.1px;width:27px;text-align:center;font-size:4.5px;color:#605e5c">¶ Звичай...</div>
<div class="t" style="left:479.3px;top:111px;width:27px;text-align:center;font-size:5.3px;font-weight:bold;color:#262626">AaБбВвІ</div>
<div class="t" style="left:479.3px;top:121.1px;width:27px;text-align:center;font-size:4.5px;color:#605e5c">Строгий</div>
<div class="t" style="left:506.9px;top:111px;width:27px;text-align:center;font-size:5.3px;color:#262626">AaБбВвГ</div>
<div class="t" style="left:506.9px;top:121.1px;width:27px;text-align:center;font-size:4.5px;color:#605e5c">¶ Без інте...</div>
<div class="t" style="left:534.5px;top:111px;width:27px;text-align:center;font-size:5.3px;font-style:italic;color:#404040">AaБбВвГ</div>
<div class="t" style="left:534.5px;top:121.1px;width:27px;text-align:center;font-size:4.5px;color:#605e5c">Слабке в...</div>
<div class="t" style="left:562.1px;top:111px;width:27px;text-align:center;font-size:5.3px;font-style:italic;color:#4472c4">AaБбВвГ</div>
<div class="t" style="left:562.1px;top:121.1px;width:27px;text-align:center;font-size:4.5px;color:#605e5c">Сильне в...</div>
<div class="t" style="left:589.7px;top:111px;width:27px;text-align:center;font-size:5.3px;font-style:italic;color:#404040">AaБбВвГ</div>
<div class="t" style="left:589.7px;top:121.1px;width:27px;text-align:center;font-size:4.5px;color:#605e5c">Цитата</div>
<div class="a" style="left:617.5px;top:104.5px;width:6px;height:22.5px;background:#f3f2f1;border:0.5px solid #d6d4d2"></div>
<svg class="a" style="left:618.5px;top:107px;" width="4" height="3" viewBox="0 0 4 3"><path d="M0.5 2 L2 0.5 L3.5 2" stroke="#aaa" stroke-width="0.5" fill="none"/></svg>
<svg class="a" style="left:618.5px;top:114px;" width="4" height="3" viewBox="0 0 4 3"><path d="M0.5 0.5 L2 2 L3.5 0.5" stroke="#555" stroke-width="0.5" fill="none"/></svg>
<svg class="a" style="left:618.5px;top:121px;" width="4" height="4" viewBox="0 0 4 4"><line x1="0.5" y1="0.5" x2="3.5" y2="0.5" stroke="#555" stroke-width="0.5"/><path d="M0.5 1.5 L2 3 L3.5 1.5" stroke="#555" stroke-width="0.5" fill="none"/></svg>
<div class="t" style="left:501.5px;top:134.3px;font-size:3.95px;color:#5a5856;font-weight:normal;font-family:'Liberation Sans';">Стилі</div>
<svg class="a" style="left:619px;top:134px;" width="4" height="4" viewBox="0 0 4 4"><path d="M0.3 0.3 H3.2 V3.2 M1.2 1.2 L3.2 3.2" stroke="#7a7a7a" stroke-width="0.45" fill="none"/></svg>
<div class="a" style="left:627.5px;top:104px;width:0.6px;height:33px;background:#d6d4d2;"></div>
<svg class="a" style="left:631.5px;top:105px;" width="7" height="7" viewBox="0 0 7 7"><circle cx="4.3" cy="2.7" r="2.2" stroke="#444" stroke-width="0.55" fill="none"/><line x1="2.7" y1="4.3" x2="0.5" y2="6.5" stroke="#444" stroke-width="0.7"/></svg>
<div class="t" style="left:639px;top:107px;font-size:4.6px;color:#262626;font-weight:normal;font-family:'Liberation Sans';">Пошук</div>
<svg class="a" style="left:657.5px;top:108px;" width="3" height="2" viewBox="0 0 3 2"><path d="M0 0 L3 0 L1.5 1.5Z" fill="#555"/></svg>
<svg class="a" style="left:631.5px;top:113.5px;" width="7" height="7" viewBox="0 0 7 7"><text x="0" y="4" font-size="3.5" fill="#b4469a" font-family="Liberation Sans">b</text><path d="M1.5 6.5 Q4 6.5 5 4" stroke="#2f6cc4" stroke-width="0.5" fill="none"/><text x="3" y="6.8" font-size="3" fill="#2f6cc4" font-family="Liberation Sans">c</text></svg>
<div class="t" style="left:639px;top:115.8px;font-size:4.6px;color:#262626;font-weight:normal;font-family:'Liberation Sans';">Замінити</div>
<svg class="a" style="left:632px;top:122px;" width="6" height="7" viewBox="0 0 6 7"><path d="M0.8 0.5 L0.8 6 L2.3 4.5 L3.5 6.5 L4.3 6 L3.2 4.2 L5.2 4Z" stroke="#444" stroke-width="0.5" fill="none"/></svg>
<div class="t" style="left:639px;top:124.2px;font-size:4.6px;color:#262626;font-weight:normal;font-family:'Liberation Sans';">Виділити</div>
<svg class="a" style="left:659.5px;top:125.5px;" width="3" height="2" viewBox="0 0 3 2"><path d="M0 0 L3 0 L1.5 1.5Z" fill="#555"/></svg>
<div class="t" style="left:636px;top:134.3px;font-size:3.95px;color:#5a5856;font-weight:normal;font-family:'Liberation Sans';">Редагування</div>
<div class="a" style="left:668.5px;top:104px;width:0.6px;height:33px;background:#d6d4d2;"></div>
<svg class="a" style="left:687.5px;top:134px;" width="5" height="3" viewBox="0 0 5 3"><path d="M0.5 2.5 L2.5 0.5 L4.5 2.5" stroke="#555" stroke-width="0.55" fill="none"/></svg>
<div class="a" style="left:104px;top:139.8px;width:591px;height:246.2px;background:#e6e6e6;"></div>
<div class="a" style="left:105.8px;top:142.7px;width:5.2px;height:4px;background:#ffffff;border:0.4px solid #c8c8c8"></div>
<div class="a" style="left:105.8px;top:148px;width:5.2px;height:26px;background:#cfcfcf;"></div>
<div class="a" style="left:105.8px;top:174px;width:5.2px;height:212px;background:#ffffff;"></div>
<div class="a" style="left:185.5px;top:141.2px;width:35.8px;height:4.6px;background:#cfcfcf;"></div>
<div class="a" style="left:221.3px;top:141.2px;width:357.7px;height:4.6px;background:#ffffff;"></div>
<div class="a" style="left:579px;top:141.2px;width:37px;height:4.6px;background:#cfcfcf;"></div>
<svg class="a" style="left:185.5px;top:141.2px;" width="431" height="5" viewBox="0 0 431 5"><text x="6.760000000000019" y="4.1" font-size="3.6" text-anchor="middle" fill="#555" font-family="Liberation Sans">2</text><rect x="10.140000000000015" y="2.2" width="0.5" height="0.5" fill="#777"/><line x1="14.02000000000001" y1="1.6" x2="14.02000000000001" y2="3.2" stroke="#777" stroke-width="0.4"/><rect x="17.400000000000034" y="2.2" width="0.5" height="0.5" fill="#777"/><text x="21.28" y="4.1" font-size="3.6" text-anchor="middle" fill="#555" font-family="Liberation Sans">1</text><rect x="24.659999999999997" y="2.2" width="0.5" height="0.5" fill="#777"/><line x1="28.539999999999992" y1="1.6" x2="28.539999999999992" y2="3.2" stroke="#777" stroke-width="0.4"/><rect x="31.920000000000016" y="2.2" width="0.5" height="0.5" fill="#777"/><rect x="39.18000000000001" y="2.2" width="0.5" height="0.5" fill="#777"/><line x1="43.06" y1="1.6" x2="43.06" y2="3.2" stroke="#777" stroke-width="0.4"/><rect x="46.44" y="2.2" width="0.5" height="0.5" fill="#777"/><text x="50.32000000000002" y="4.1" font-size="3.6" text-anchor="middle" fill="#555" font-family="Liberation Sans">1</text><rect x="53.70000000000002" y="2.2" width="0.5" height="0.5" fill="#777"/><line x1="57.58000000000001" y1="1.6" x2="57.58000000000001" y2="3.2" stroke="#777" stroke-width="0.4"/><rect x="60.960000000000036" y="2.2" width="0.5" height="0.5" fill="#777"/><text x="64.84" y="4.1" font-size="3.6" text-anchor="middle" fill="#555" font-family="Liberation Sans">2</text><rect x="68.22" y="2.2" width="0.5" height="0.5" fill="#777"/><line x1="72.10000000000002" y1="1.6" x2="72.10000000000002" y2="3.2" stroke="#777" stroke-width="0.4"/><rect x="75.48000000000002" y="2.2" width="0.5" height="0.5" fill="#777"/><text x="79.36000000000001" y="4.1" font-size="3.6" text-anchor="middle" fill="#555" font-family="Liberation Sans">3</text><rect x="82.74000000000001" y="2.2" width="0.5" height="0.5" fill="#777"/><line x1="86.62" y1="1.6" x2="86.62" y2="3.2" stroke="#777" stroke-width="0.4"/><rect x="90.0" y="2.2" width="0.5" height="0.5" fill="#777"/><text x="93.88" y="4.1" font-size="3.6" text-anchor="middle" fill="#555" font-family="Liberation Sans">4</text><rect x="97.25999999999999" y="2.2" width="0.5" height="0.5" fill="#777"/><line x1="101.13999999999999" y1="1.6" x2="101.13999999999999" y2="3.2" stroke="#777" stroke-width="0.4"/><rect x="104.51999999999998" y="2.2" width="0.5" height="0.5" fill="#777"/><text x="108.39999999999998" y="4.1" font-size="3.6" text-anchor="middle" fill="#555" font-family="Liberation Sans">5</text><rect x="111.77999999999997" y="2.2" width="0.5" height="0.5" fill="#777"/><line x1="115.65999999999997" y1="1.6" x2="115.65999999999997" y2="3.2" stroke="#777" stroke-width="0.4"/><rect x="119.03999999999996" y="2.2" width="0.5" height="0.5" fill="#777"/><text x="122.92000000000002" y="4.1" font-size="3.6" text-anchor="middle" fill="#555" font-family="Liberation Sans">6</text><rect x="126.30000000000001" y="2.2" width="0.5" height="0.5" fill="#777"/><line x1="130.18" y1="1.6" x2="130.18" y2="3.2" stroke="#777" stroke-width="0.4"/><rect x="133.56" y="2.2" width="0.5" height="0.5" fill="#777"/><text x="137.44" y="4.1" font-size="3.6" text-anchor="middle" fill="#555" font-family="Liberation Sans">7</text><rect x="140.82" y="2.2" width="0.5" height="0.5" fill="#777"/><line x1="144.7" y1="1.6" x2="144.7" y2="3.2" stroke="#777" stroke-width="0.4"/><rect x="148.07999999999998" y="2.2" width="0.5" height="0.5" fill="#777"/><text x="151.96000000000004" y="4.1" font-size="3.6" text-anchor="middle" fill="#555" font-family="Liberation Sans">8</text><rect x="155.34000000000003" y="2.2" width="0.5" height="0.5" fill="#777"/><line x1="159.22000000000003" y1="1.6" x2="159.22000000000003" y2="3.2" stroke="#777" stroke-width="0.4"/><rect x="162.60000000000002" y="2.2" width="0.5" height="0.5" fill="#777"/><text x="166.48000000000002" y="4.1" font-size="3.6" text-anchor="middle" fill="#555" font-family="Liberation Sans">9</text><rect x="169.86" y="2.2" width="0.5" height="0.5" fill="#777"/><line x1="173.74" y1="1.6" x2="173.74" y2="3.2" stroke="#777" stroke-width="0.4"/><rect x="177.12" y="2.2" width="0.5" height="0.5" fill="#777"/><text x="181.0" y="4.1" font-size="3.6" text-anchor="middle" fill="#555" font-family="Liberation Sans">10</text><rect x="184.38" y="2.2" width="0.5" height="0.5" fill="#777"/><line x1="188.26" y1="1.6" x2="188.26" y2="3.2" stroke="#777" stroke-width="0.4"/><rect x="191.64" y="2.2" width="0.5" height="0.5" fill="#777"/><text x="195.51999999999998" y="4.1" font-size="3.6" text-anchor="middle" fill="#555" font-family="Liberation Sans">11</text><rect x="198.89999999999998" y="2.2" width="0.5" height="0.5" fill="#777"/><line x1="202.77999999999997" y1="1.6" x2="202.77999999999997" y2="3.2" stroke="#777" stroke-width="0.4"/><rect x="206.15999999999997" y="2.2" width="0.5" height="0.5" fill="#777"/><text x="210.04000000000002" y="4.1" font-size="3.6" text-anchor="middle" fill="#555" font-family="Liberation Sans">12</text><rect x="213.42000000000002" y="2.2" width="0.5" height="0.5" fill="#777"/><line x1="217.3" y1="1.6" x2="217.3" y2="3.2" stroke="#777" stroke-width="0.4"/><rect x="220.68" y="2.2" width="0.5" height="0.5" fill="#777"/><text x="224.56" y="4.1" font-size="3.6" text-anchor="middle" fill="#555" font-family="Liberation Sans">13</text><rect x="227.94" y="2.2" width="0.5" height="0.5" fill="#777"/><line x1="231.82" y1="1.6" x2="231.82" y2="3.2" stroke="#777" stroke-width="0.4"/><rect x="235.2" y="2.2" width="0.5" height="0.5" fill="#777"/><text x="239.08000000000004" y="4.1" font-size="3.6" text-anchor="middle" fill="#555" font-family="Liberation Sans">14</text><rect x="242.46000000000004" y="2.2" width="0.5" height="0.5" fill="#777"/><line x1="246.34000000000003" y1="1.6" x2="246.34000000000003" y2="3.2" stroke="#777" stroke-width="0.4"/><rect x="249.72000000000003" y="2.2" width="0.5" height="0.5" fill="#777"/><text x="253.60000000000002" y="4.1" font-size="3.6" text-anchor="middle" fill="#555" font-family="Liberation Sans">15</text><rect x="256.98" y="2.2" width="0.5" height="0.5" fill="#777"/><line x1="260.86" y1="1.6" x2="260.86" y2="3.2" stroke="#777" stroke-width="0.4"/><rect x="264.24" y="2.2" width="0.5" height="0.5" fill="#777"/><text x="268.12" y="4.1" font-size="3.6" text-anchor="middle" fill="#555" font-family="Liberation Sans">16</text><rect x="271.5" y="2.2" width="0.5" height="0.5" fill="#777"/><line x1="275.38" y1="1.6" x2="275.38" y2="3.2" stroke="#777" stroke-width="0.4"/><rect x="278.76" y="2.2" width="0.5" height="0.5" fill="#777"/><text x="282.64" y="4.1" font-size="3.6" text-anchor="middle" fill="#555" font-family="Liberation Sans">17</text><rect x="286.02" y="2.2" width="0.5" height="0.5" fill="#777"/><line x1="289.9" y1="1.6" x2="289.9" y2="3.2" stroke="#777" stroke-width="0.4"/><rect x="293.28" y="2.2" width="0.5" height="0.5" fill="#777"/><text x="297.16" y="4.1" font-size="3.6" text-anchor="middle" fill="#555" font-family="Liberation Sans">18</text><rect x="300.54" y="2.2" width="0.5" height="0.5" fill="#777"/><line x1="304.42" y1="1.6" x2="304.42" y2="3.2" stroke="#777" stroke-width="0.4"/><rect x="307.8" y="2.2" width="0.5" height="0.5" fill="#777"/><text x="311.68" y="4.1" font-size="3.6" text-anchor="middle" fill="#555" font-family="Liberation Sans">19</text><rect x="315.06" y="2.2" width="0.5" height="0.5" fill="#777"/><line x1="318.94" y1="1.6" x2="318.94" y2="3.2" stroke="#777" stroke-width="0.4"/><rect x="322.32" y="2.2" width="0.5" height="0.5" fill="#777"/><text x="326.2" y="4.1" font-size="3.6" text-anchor="middle" fill="#555" font-family="Liberation Sans">20</text><rect x="329.58000000000004" y="2.2" width="0.5" height="0.5" fill="#777"/><line x1="333.46000000000004" y1="1.6" x2="333.46000000000004" y2="3.2" stroke="#777" stroke-width="0.4"/><rect x="336.84000000000003" y="2.2" width="0.5" height="0.5" fill="#777"/><text x="340.72" y="4.1" font-size="3.6" text-anchor="middle" fill="#555" font-family="Liberation Sans">21</text><rect x="344.1" y="2.2" width="0.5" height="0.5" fill="#777"/><line x1="347.98" y1="1.6" x2="347.98" y2="3.2" stroke="#777" stroke-width="0.4"/><rect x="351.36" y="2.2" width="0.5" height="0.5" fill="#777"/><text x="355.24" y="4.1" font-size="3.6" text-anchor="middle" fill="#555" font-family="Liberation Sans">22</text><rect x="358.62" y="2.2" width="0.5" height="0.5" fill="#777"/><line x1="362.5" y1="1.6" x2="362.5" y2="3.2" stroke="#777" stroke-width="0.4"/><rect x="365.88" y="2.2" width="0.5" height="0.5" fill="#777"/><text x="369.76" y="4.1" font-size="3.6" text-anchor="middle" fill="#555" font-family="Liberation Sans">23</text><rect x="373.14" y="2.2" width="0.5" height="0.5" fill="#777"/><line x1="377.02" y1="1.6" x2="377.02" y2="3.2" stroke="#777" stroke-width="0.4"/><rect x="380.4" y="2.2" width="0.5" height="0.5" fill="#777"/><text x="384.28" y="4.1" font-size="3.6" text-anchor="middle" fill="#555" font-family="Liberation Sans">24</text><rect x="387.65999999999997" y="2.2" width="0.5" height="0.5" fill="#777"/><line x1="391.53999999999996" y1="1.6" x2="391.53999999999996" y2="3.2" stroke="#777" stroke-width="0.4"/><rect x="394.91999999999996" y="2.2" width="0.5" height="0.5" fill="#777"/><text x="398.79999999999995" y="4.1" font-size="3.6" text-anchor="middle" fill="#555" font-family="Liberation Sans">25</text><rect x="402.17999999999995" y="2.2" width="0.5" height="0.5" fill="#777"/><line x1="406.05999999999995" y1="1.6" x2="406.05999999999995" y2="3.2" stroke="#777" stroke-width="0.4"/><rect x="409.43999999999994" y="2.2" width="0.5" height="0.5" fill="#777"/><text x="413.31999999999994" y="4.1" font-size="3.6" text-anchor="middle" fill="#555" font-family="Liberation Sans">26</text><rect x="416.69999999999993" y="2.2" width="0.5" height="0.5" fill="#777"/><line x1="420.5799999999999" y1="1.6" x2="420.5799999999999" y2="3.2" stroke="#777" stroke-width="0.4"/><rect x="423.9599999999999" y="2.2" width="0.5" height="0.5" fill="#777"/><text x="427.8399999999999" y="4.1" font-size="3.6" text-anchor="middle" fill="#555" font-family="Liberation Sans">27</text></svg>
<svg class="a" style="left:105.8px;top:148px;" width="5.2" height="238" viewBox="0 0 5.2 238"><text x="2.6" y="12.850000000000012" font-size="3.6" text-anchor="middle" fill="#555" font-family="Liberation Sans" transform="rotate(-90 2.6 11.550000000000011)">1</text><rect x="2.35" y="14.912500000000023" width="0.5" height="0.5" fill="#777"/><line x1="1.8" y1="18.775000000000006" x2="3.4" y2="18.775000000000006" stroke="#777" stroke-width="0.4"/><rect x="2.35" y="22.137500000000017" width="0.5" height="0.5" fill="#777"/><rect x="2.35" y="29.36250000000001" width="0.5" height="0.5" fill="#777"/><line x1="1.8" y1="33.224999999999994" x2="3.4" y2="33.224999999999994" stroke="#777" stroke-width="0.4"/><rect x="2.35" y="36.587500000000006" width="0.5" height="0.5" fill="#777"/><text x="2.6" y="41.749999999999986" font-size="3.6" text-anchor="middle" fill="#555" font-family="Liberation Sans" transform="rotate(-90 2.6 40.44999999999999)">1</text><rect x="2.35" y="43.8125" width="0.5" height="0.5" fill="#777"/><line x1="1.8" y1="47.67499999999998" x2="3.4" y2="47.67499999999998" stroke="#777" stroke-width="0.4"/><rect x="2.35" y="51.037499999999994" width="0.5" height="0.5" fill="#777"/><text x="2.6" y="56.2" font-size="3.6" text-anchor="middle" fill="#555" font-family="Liberation Sans" transform="rotate(-90 2.6 54.900000000000006)">2</text><rect x="2.35" y="58.26250000000002" width="0.5" height="0.5" fill="#777"/><line x1="1.8" y1="62.125" x2="3.4" y2="62.125" stroke="#777" stroke-width="0.4"/><rect x="2.35" y="65.48750000000001" width="0.5" height="0.5" fill="#777"/><text x="2.6" y="70.64999999999999" font-size="3.6" text-anchor="middle" fill="#555" font-family="Liberation Sans" transform="rotate(-90 2.6 69.35)">3</text><rect x="2.35" y="72.7125" width="0.5" height="0.5" fill="#777"/><line x1="1.8" y1="76.57499999999999" x2="3.4" y2="76.57499999999999" stroke="#777" stroke-width="0.4"/><rect x="2.35" y="79.9375" width="0.5" height="0.5" fill="#777"/><text x="2.6" y="85.10000000000001" font-size="3.6" text-anchor="middle" fill="#555" font-family="Liberation Sans" transform="rotate(-90 2.6 83.80000000000001)">4</text><rect x="2.35" y="87.16250000000002" width="0.5" height="0.5" fill="#777"/><line x1="1.8" y1="91.025" x2="3.4" y2="91.025" stroke="#777" stroke-width="0.4"/><rect x="2.35" y="94.38750000000002" width="0.5" height="0.5" fill="#777"/><text x="2.6" y="99.55" font-size="3.6" text-anchor="middle" fill="#555" font-family="Liberation Sans" transform="rotate(-90 2.6 98.25)">5</text><rect x="2.35" y="101.61250000000001" width="0.5" height="0.5" fill="#777"/><line x1="1.8" y1="105.475" x2="3.4" y2="105.475" stroke="#777" stroke-width="0.4"/><rect x="2.35" y="108.83749999999998" width="0.5" height="0.5" fill="#777"/><text x="2.6" y="113.99999999999999" font-size="3.6" text-anchor="middle" fill="#555" font-family="Liberation Sans" transform="rotate(-90 2.6 112.69999999999999)">6</text><rect x="2.35" y="116.0625" width="0.5" height="0.5" fill="#777"/><line x1="1.8" y1="119.92500000000001" x2="3.4" y2="119.92500000000001" stroke="#777" stroke-width="0.4"/><rect x="2.35" y="123.28749999999997" width="0.5" height="0.5" fill="#777"/><text x="2.6" y="128.45" font-size="3.6" text-anchor="middle" fill="#555" font-family="Liberation Sans" transform="rotate(-90 2.6 127.14999999999998)">7</text><rect x="2.35" y="130.5125" width="0.5" height="0.5" fill="#777"/><line x1="1.8" y1="134.375" x2="3.4" y2="134.375" stroke="#777" stroke-width="0.4"/><rect x="2.35" y="137.73749999999995" width="0.5" height="0.5" fill="#777"/><text x="2.6" y="142.90000000000003" font-size="3.6" text-anchor="middle" fill="#555" font-family="Liberation Sans" transform="rotate(-90 2.6 141.60000000000002)">8</text><rect x="2.35" y="144.96250000000003" width="0.5" height="0.5" fill="#777"/><line x1="1.8" y1="148.82500000000005" x2="3.4" y2="148.82500000000005" stroke="#777" stroke-width="0.4"/><rect x="2.35" y="152.1875" width="0.5" height="0.5" fill="#777"/><text x="2.6" y="157.34999999999997" font-size="3.6" text-anchor="middle" fill="#555" font-family="Liberation Sans" transform="rotate(-90 2.6 156.04999999999995)">9</text><rect x="2.35" y="159.41249999999997" width="0.5" height="0.5" fill="#777"/><line x1="1.8" y1="163.27499999999998" x2="3.4" y2="163.27499999999998" stroke="#777" stroke-width="0.4"/><rect x="2.35" y="166.63749999999993" width="0.5" height="0.5" fill="#777"/><text x="2.6" y="171.8" font-size="3.6" text-anchor="middle" fill="#555" font-family="Liberation Sans" transform="rotate(-90 2.6 170.5)">10</text><rect x="2.35" y="173.8625" width="0.5" height="0.5" fill="#777"/><line x1="1.8" y1="177.72500000000002" x2="3.4" y2="177.72500000000002" stroke="#777" stroke-width="0.4"/><rect x="2.35" y="181.08749999999998" width="0.5" height="0.5" fill="#777"/><text x="2.6" y="186.25" font-size="3.6" text-anchor="middle" fill="#555" font-family="Liberation Sans" transform="rotate(-90 2.6 184.95)">11</text><rect x="2.35" y="188.3125" width="0.5" height="0.5" fill="#777"/><line x1="1.8" y1="192.175" x2="3.4" y2="192.175" stroke="#777" stroke-width="0.4"/><rect x="2.35" y="195.53749999999997" width="0.5" height="0.5" fill="#777"/><text x="2.6" y="200.7" font-size="3.6" text-anchor="middle" fill="#555" font-family="Liberation Sans" transform="rotate(-90 2.6 199.39999999999998)">12</text><rect x="2.35" y="202.7625" width="0.5" height="0.5" fill="#777"/><line x1="1.8" y1="206.625" x2="3.4" y2="206.625" stroke="#777" stroke-width="0.4"/><rect x="2.35" y="209.98749999999995" width="0.5" height="0.5" fill="#777"/><text x="2.6" y="215.15000000000003" font-size="3.6" text-anchor="middle" fill="#555" font-family="Liberation Sans" transform="rotate(-90 2.6 213.85000000000002)">13</text><rect x="2.35" y="217.21250000000003" width="0.5" height="0.5" fill="#777"/><line x1="1.8" y1="221.07500000000005" x2="3.4" y2="221.07500000000005" stroke="#777" stroke-width="0.4"/><rect x="2.35" y="224.4375" width="0.5" height="0.5" fill="#777"/><text x="2.6" y="229.59999999999997" font-size="3.6" text-anchor="middle" fill="#555" font-family="Liberation Sans" transform="rotate(-90 2.6 228.29999999999995)">14</text><rect x="2.35" y="231.66249999999997" width="0.5" height="0.5" fill="#777"/><line x1="1.8" y1="235.52499999999998" x2="3.4" y2="235.52499999999998" stroke="#777" stroke-width="0.4"/></svg>
<svg class="a" style="left:218.8px;top:139.8px;" width="5" height="9" viewBox="0 0 5 9"><path d="M0.5 0.5 H4.5 V2 L2.5 3.2 L0.5 2Z" fill="#fff" stroke="#777" stroke-width="0.4"/><path d="M0.5 7.5 L2.5 6 L4.5 7.5 V8.5 H0.5Z" fill="#fff" stroke="#777" stroke-width="0.4"/></svg>
<div class="a" style="left:185.5px;top:148px;width:430.7px;height:238px;background:#ffffff;"></div>
<div class="t" style="left:255.2px;top:175.15px;width:300px;text-align:center;font-size:7.1px;font-weight:bold;font-family:'Liberation Serif';color:#000;transform:scaleY(1.12);transform-origin:0 5.95px;-webkit-text-stroke:0.15px #000">ЗАУВАЖЕННЯ·ГЕР·ЩОДО·ОПП·¶</div>
<div class="t" style="left:252.7px;top:185.35px;width:300px;text-align:center;font-size:7.1px;font-weight:bold;font-family:'Liberation Serif';color:#000;transform:scaleY(1.12);transform-origin:0 5.95px;-webkit-text-stroke:0.15px #000">СЕРЕДНЯ·ОСВІТА·(ФІЗИКА·ТА·АСТРОНОМІЯ)_магістратура¶</div>
<div class="t" style="left:222.5px;top:194.44px;font-size:7.0px;color:#000;font-weight:normal;font-family:'Liberation Serif';transform:scaleY(1.12);transform-origin:0 5.86px;-webkit-text-stroke:0.15px #000;">¶</div>
<div class="a" style="left:222.5px;top:202.2px;width:374.5px;height:0.8px;background:#6a6a6a;"></div>
<div class="a" style="left:222.5px;top:220.8px;width:374.5px;height:0.8px;background:#6a6a6a;"></div>
<div class="a" style="left:222.5px;top:230px;width:374.5px;height:1.5px;background:#8a8a8a;"></div>
<div class="a" style="left:222.3px;top:202.2px;width:0.8px;height:190px;background:#6a6a6a;"></div>
<div class="a" style="left:596.3px;top:202.2px;width:0.8px;height:190px;background:#6a6a6a;"></div>
<div class="a" style="left:247px;top:202.2px;width:0.8px;height:19.5px;background:#6a6a6a;"></div>
<div class="a" style="left:247px;top:230.3px;width:0.8px;height:160px;background:#6a6a6a;"></div>
<div class="t" style="left:225.3px;top:204.24px;font-size:7.0px;color:#000;font-weight:bold;font-family:'Liberation Serif';transform:scaleY(1.12);transform-origin:0 5.86px;-webkit-text-stroke:0.15px #000;"><u style='text-decoration-color:#e8a0a0;text-decoration-thickness:0.45px;text-underline-offset:0.7px;text-decoration-style:dotted'>Підкр</u></div>
<div class="t" style="left:225.3px;top:214.04px;font-size:7.0px;color:#000;font-weight:bold;font-family:'Liberation Serif';transform:scaleY(1.12);transform-origin:0 5.86px;-webkit-text-stroke:0.15px #000;"><u style='text-decoration-color:#e8a0a0;text-decoration-thickness:0.45px;text-underline-offset:0.7px;text-decoration-style:dotted'>итерій</u><span style='color:#555;font-weight:normal;font-size:5px'>¤</span></div>
<div class="t" style="left:403px;top:204.74px;font-size:7.0px;color:#000;font-weight:bold;font-family:'Liberation Serif';transform:scaleY(1.12);transform-origin:0 5.86px;-webkit-text-stroke:0.15px #000;">Зауваження<span style='color:#555;font-weight:normal;font-size:5px'>¤</span></div>
<div class="t" style="left:597.8px;top:205.11px;font-size:5px;color:#444;font-weight:normal;font-family:'Liberation Serif';transform:scaleY(1.12);transform-origin:0 4.19px;-webkit-text-stroke:0.15px #444;">¤</div>
<div class="t" style="left:597.8px;top:224.41px;font-size:5px;color:#444;font-weight:normal;font-family:'Liberation Serif';transform:scaleY(1.12);transform-origin:0 4.19px;-webkit-text-stroke:0.15px #444;">¤</div>
<div class="t" style="left:333.7px;top:223.44px;font-size:7.0px;color:#000;font-weight:bold;font-family:'Liberation Serif';transform:scaleY(1.12);transform-origin:0 5.86px;-webkit-text-stroke:0.15px #000;">Критерій·1.·<u style='text-decoration-color:#e8a0a0;text-decoration-thickness:0.45px;text-underline-offset:0.7px;text-decoration-style:dotted'>Проєктування</u>·освітньої·програми<span style='color:#555;font-weight:normal;font-size:5px'>¤</span></div>
<div class="t" style="left:597.8px;top:233.61px;font-size:5px;color:#444;font-weight:normal;font-family:'Liberation Serif';transform:scaleY(1.12);transform-origin:0 4.19px;-webkit-text-stroke:0.15px #444;">¤</div>
<div class="t" style="left:225.5px;top:233.14px;font-size:7.0px;color:#000;font-weight:bold;font-family:'Liberation Serif';transform:scaleY(1.12);transform-origin:0 5.86px;-webkit-text-stroke:0.15px #000;">1.2<span style='color:#555;font-weight:normal;font-size:5px'>¤</span></div>
<div class="a" style="left:185.5px;top:148px;width:431px;height:238px;overflow:hidden">
<div class="t" style="left:80.80px;top:85.08px;width:328.70px;font-size:6.95px;font-family:'Liberation Serif';color:#000;text-align:justify;text-align-last:justify;word-spacing:-1.74px;white-space:nowrap;transform:scaleY(1.18);transform-origin:0 5.82px;-webkit-text-stroke:0.15px #000">ОПП · 2024 · та · 2025 · років · Середня · освіта · (Фізика · та · астрономія) · не · передбачає · присвоєння · професійної</div>
<div class="t" style="left:65.50px;top:93.34px;width:344.00px;font-size:6.95px;font-family:'Liberation Serif';color:#000;text-align:justify;text-align-last:justify;word-spacing:-1.74px;white-space:nowrap;transform:scaleY(1.18);transform-origin:0 5.82px;-webkit-text-stroke:0.15px #000">кваліфікації, · хоча · мета · ОПП · 2024 · року, · яка · акредитується, · спрямована · на · підготовку · «вчителів · фізики · та</div>
<div class="t" style="left:65.50px;top:101.60px;width:344.00px;font-size:6.95px;font-family:'Liberation Serif';color:#000;text-align:justify;text-align-last:justify;word-spacing:-1.74px;white-space:nowrap;transform:scaleY(1.18);transform-origin:0 5.82px;-webkit-text-stroke:0.15px #000">астрономії · закладу · загальної · середньої · освіти, · викладача · закладу · фахової · <u style='text-decoration-color:#e8a0a0;text-decoration-thickness:0.45px;text-underline-offset:0.7px;text-decoration-style:dotted'>передвищої</u> · освіти» · (с.5.5 · з · мети</div>
<div class="t" style="left:65.50px;top:109.86px;width:344.00px;font-size:6.95px;font-family:'Liberation Serif';color:#000;text-align:justify;text-align-last:justify;word-spacing:-1.74px;white-space:nowrap;transform:scaleY(1.18);transform-origin:0 5.82px;-webkit-text-stroke:0.15px #000">ОПП2024). · Відсутність · присвоєння · професійної · кваліфікації · ЗВО · обґрунтовує · так: · «З · метою · не · обмежувати</div>
<div class="t" style="left:65.50px;top:118.12px;width:344.00px;font-size:6.95px;font-family:'Liberation Serif';color:#000;text-align:justify;text-align-last:justify;word-spacing:-1.74px;white-space:nowrap;transform:scaleY(1.18);transform-origin:0 5.82px;-webkit-text-stroke:0.15px #000">сфери · можливого · майбутнього · працевлаштування · випускників · (протокол · від · 24.04.2025 · № · 4 · засідання · робочої</div>
<div class="t" style="left:65.50px;top:126.38px;width:344.00px;font-size:6.95px;font-family:'Liberation Serif';color:#000;text-align:justify;text-align-last:justify;word-spacing:-1.74px;white-space:nowrap;transform:scaleY(1.18);transform-origin:0 5.82px;-webkit-text-stroke:0.15px #000">групи · з · оновлення · ОПП · – · (с.4 · Звіту · ЕП). · Підтримуємо · ЕГ · в · тому, · що · «відсутність · присвоєння · професійної</div>
<div class="t" style="left:65.50px;top:134.64px;width:344.00px;font-size:6.95px;font-family:'Liberation Serif';color:#000;text-align:justify;text-align-last:justify;word-spacing:-1.74px;white-space:nowrap;transform:scaleY(1.18);transform-origin:0 5.82px;-webkit-text-stroke:0.15px #000">кваліфікації · є · проявом · академічної · автономії · ЗВО · і · складає · його · право, · а · не · обов'язок. · Зазначимо, · що · ЕГ</div>
<div class="t" style="left:65.50px;top:142.90px;width:344.00px;font-size:6.95px;font-family:'Liberation Serif';color:#000;text-align:justify;text-align-last:justify;word-spacing:-1.74px;white-space:nowrap;transform:scaleY(1.18);transform-origin:0 5.82px;-webkit-text-stroke:0.15px #000">встановила · факт · того, · що · зміст · ОПП · відповідає · вимогам · відповідного · професійного · стандарту · вчителя · закладу</div>
<div class="t" style="left:65.50px;top:151.16px;width:344.00px;font-size:6.95px;font-family:'Liberation Serif';color:#000;white-space:nowrap;transform:scaleY(1.18);transform-origin:0 5.82px;-webkit-text-stroke:0.15px #000">загальної·середньої·освіти·(2024)».¶</div>
<div class="t" style="left:80.80px;top:159.42px;width:328.70px;font-size:6.95px;font-family:'Liberation Serif';color:#000;text-align:justify;text-align-last:justify;word-spacing:-1.74px;white-space:nowrap;transform:scaleY(1.18);transform-origin:0 5.82px;-webkit-text-stroke:0.15px #000">Разом · з · тим · в · меті · ОПП · 2024 · зазначається · спрямованість · на · підготовку · не · лише · «вчителів · фізики · та</div>
<div class="t" style="left:65.50px;top:167.68px;width:344.00px;font-size:6.95px;font-family:'Liberation Serif';color:#000;text-align:justify;text-align-last:justify;word-spacing:-1.74px;letter-spacing:-0.01px;white-space:nowrap;transform:scaleY(1.18);transform-origin:0 5.82px;-webkit-text-stroke:0.15px #000">астрономії · закладу · загальної · середньої · освіти», · а · й · «викладача · закладу · фахової · <u style='text-decoration-color:#e8a0a0;text-decoration-thickness:0.45px;text-underline-offset:0.7px;text-decoration-style:dotted'>передвищої</u> · освіти». · Аналіз · Зміст</div>
<div class="t" style="left:65.50px;top:175.94px;width:344.00px;font-size:6.95px;font-family:'Liberation Serif';color:#000;text-align:justify;text-align-last:justify;word-spacing:-1.74px;white-space:nowrap;transform:scaleY(1.18);transform-origin:0 5.82px;-webkit-text-stroke:0.15px #000">ЗК, · ФУ · та · ПРН · ОПП · 2024 · року · свідчать · про · неправомірне · окреслення · придатності · випускників · до</div>
<div class="t" style="left:65.50px;top:184.20px;width:344.00px;font-size:6.95px;font-family:'Liberation Serif';color:#000;text-align:justify;text-align-last:justify;word-spacing:-1.74px;white-space:nowrap;transform:scaleY(1.18);transform-origin:0 5.82px;-webkit-text-stroke:0.15px #000">працевлаштування · на · посаді · викладача · закладу · вищої · освіти, · не · лише · тому, · що · відповідний · Професійний</div>
<div class="t" style="left:65.50px;top:192.46px;width:344.00px;font-size:6.95px;font-family:'Liberation Serif';color:#000;text-align:justify;text-align-last:justify;word-spacing:-1.74px;white-space:nowrap;transform:scaleY(1.18);transform-origin:0 5.82px;-webkit-text-stroke:0.15px #000">стандарт · на · групу · професій · «Викладачі · закладів · вищої · освіти» · не · був · врахований · в · змісті · ОПП, · а · й · тому, · що</div>
<div class="t" style="left:65.50px;top:200.72px;width:344.00px;font-size:6.95px;font-family:'Liberation Serif';color:#000;text-align:justify;text-align-last:justify;word-spacing:-1.74px;letter-spacing:-0.05px;white-space:nowrap;transform:scaleY(1.18);transform-origin:0 5.82px;-webkit-text-stroke:0.15px #000">підготовка · до · діяльності · у · ЗВО · та · ЗФПО · не · відображено · в · повною · мірою · в · змісті · ОПП. · ЕГ · на · с.5 · не · звертає · увагу</div>
<div class="t" style="left:65.50px;top:208.98px;width:344.00px;font-size:6.95px;font-family:'Liberation Serif';color:#000;white-space:nowrap;transform:scaleY(1.18);transform-origin:0 5.82px;-webkit-text-stroke:0.15px #000">на·ці·обставини·у·цій·ОПП·2024·року,·що·акредитується.¶</div>
<div class="t" style="left:80.80px;top:217.24px;width:328.70px;font-size:6.95px;font-family:'Liberation Serif';color:#000;text-align:justify;text-align-last:justify;word-spacing:-1.74px;white-space:nowrap;transform:scaleY(1.18);transform-origin:0 5.82px;-webkit-text-stroke:0.15px #000">Разом · з · тим, · варто · зазначити, · що · у · ОПП · 2025 · року · попри · те · що · жодна · професійна · кваліфікація · здобувачам</div>
<div class="t" style="left:65.50px;top:225.50px;width:344.00px;font-size:6.95px;font-family:'Liberation Serif';color:#000;text-align:justify;text-align-last:justify;word-spacing:-1.74px;white-space:nowrap;transform:scaleY(1.18);transform-origin:0 5.82px;-webkit-text-stroke:0.15px #000">теж · не · присвоюється · (що · є · правом · ЗВО), · акцент · ОПП · зміщується · на · підготовку · вчителів · ЗЗСО. · Зокрема,</div>
<div class="t" style="left:65.50px;top:233.76px;width:344.00px;font-size:6.95px;font-family:'Liberation Serif';color:#000;text-align:justify;text-align-last:justify;word-spacing:-1.74px;white-space:nowrap;transform:scaleY(1.18);transform-origin:0 5.82px;-webkit-text-stroke:0.15px #000">спостерігаємо · такі · зміни · в · цілях · ОПП: · «підготовка · конкурентоздатного · вчителя · фізики · та · астрономії · закладу</div>
</div>
<div class="a" style="left:104px;top:386px;width:591px;height:8px;background:#f3f2f1;"></div>
<div class="t" style="left:106.8px;top:388.3px;font-size:4.1px;color:#5a5856;font-weight:normal;font-family:'Liberation Sans';">Сторінка 1 із 6</div>
<div class="t" style="left:141px;top:388.3px;font-size:4.05px;color:#5a5856;font-weight:normal;font-family:'Liberation Sans';">Кількість слів: 1673</div>
<svg class="a" style="left:182.5px;top:387px;" width="6" height="6" viewBox="0 0 6 6"><rect x="0.5" y="0.5" width="5" height="5" stroke="#666" stroke-width="0.5" fill="none"/><path d="M1.2 3 L2.5 4.3 L4.8 1.5" stroke="#666" stroke-width="0.5" fill="none"/></svg>
<div class="t" style="left:196.6px;top:388.3px;font-size:4.0px;color:#5a5856;font-weight:normal;font-family:'Liberation Sans';">українська</div>
<svg class="a" style="left:543px;top:387px;" width="6" height="6" viewBox="0 0 6 6"><path d="M0.5 0.5 L5.5 5.5 M5.5 0.5 L0.5 5.5" stroke="#777" stroke-width="0.5"/><rect x="1.5" y="1.5" width="3" height="3" fill="none" stroke="#777" stroke-width="0.4"/></svg>
<div class="t" style="left:550px;top:388.3px;font-size:4.0px;color:#5a5856;font-weight:normal;font-family:'Liberation Sans';">Фокусування</div>
<svg class="a" style="left:584.5px;top:387px;" width="7" height="6" viewBox="0 0 7 6"><rect x="0.5" y="0.5" width="6" height="5" stroke="#777" stroke-width="0.5" fill="none"/><line x1="3.5" y1="0.5" x2="3.5" y2="5.5" stroke="#777" stroke-width="0.4"/><line x1="0.5" y1="3" x2="6.5" y2="3" stroke="#777" stroke-width="0.4"/></svg>
<div class="a" style="left:598.5px;top:386px;width:10px;height:8px;background:#d2d0ce;"></div>
<svg class="a" style="left:601px;top:387px;" width="5" height="6" viewBox="0 0 5 6"><rect x="0.5" y="0.5" width="4" height="5" stroke="#555" stroke-width="0.5" fill="#bbb"/></svg>
<svg class="a" style="left:616.5px;top:387px;" width="6" height="6" viewBox="0 0 6 6"><rect x="0.5" y="0.5" width="5" height="5" stroke="#777" stroke-width="0.5" fill="none"/><circle cx="3" cy="3" r="1.3" fill="none" stroke="#777" stroke-width="0.4"/></svg>
<div class="t" style="left:630.5px;top:387.5px;font-size:4.5px;color:#605e5c;font-weight:normal;font-family:'Liberation Sans';">–</div>
<div class="a" style="left:636px;top:389.8px;width:38px;height:0.5px;background:#8a8886;"></div>
<div class="a" style="left:651.5px;top:387.5px;width:1.5px;height:4.5px;background:#555;"></div>
<div class="t" style="left:674.5px;top:387.8px;font-size:4.5px;color:#605e5c;font-weight:normal;font-family:'Liberation Sans';">+</div>
<div class="t" style="left:682px;top:388.3px;font-size:4.0px;color:#5a5856;font-weight:normal;font-family:'Liberation Sans';">100%</div>
<svg class="a" style="left:21px;top:399px;" width="14" height="14" viewBox="0 0 14 14"><rect x="4.7" y="0.7" width="4.6" height="7.6" rx="2.3" stroke="#f2f4fa" stroke-width="1" fill="none"/><path d="M2.8 6.2 Q2.8 10.3 7 10.3 Q11.2 10.3 11.2 6.2 M7 10.3 V12.7 M4.8 12.8 H9.2" stroke="#f2f4fa" stroke-width="0.95" fill="none"/><line x1="1" y1="12.3" x2="12.8" y2="1.2" stroke="#e8336b" stroke-width="1.3"/></svg>
<div class="t" style="left:-12.5px;top:416px;width:80px;text-align:center;font-size:5.95px;color:#f4f6fb;font-weight:bold">Звук</div>
<svg class="a" style="left:41.5px;top:404.5px;" width="5" height="3" viewBox="0 0 5 3"><path d="M0.6 2.4 L2.5 0.6 L4.4 2.4" stroke="#e8ecf5" stroke-width="0.9" fill="none"/></svg>
<svg class="a" style="left:68px;top:400px;" width="15" height="12" viewBox="0 0 15 12"><rect x="0.8" y="2.5" width="9.4" height="8" rx="1" stroke="#f2f4fa" stroke-width="1" fill="none"/><path d="M10.5 5.3 L14.2 3.2 V9.8 L10.5 7.7" stroke="#f2f4fa" stroke-width="1" fill="none"/><line x1="1.2" y1="11.5" x2="12.8" y2="0.7" stroke="#e8336b" stroke-width="1.3"/></svg>
<div class="t" style="left:36px;top:416px;width:80px;text-align:center;font-size:5.95px;color:#f4f6fb;font-weight:bold">Видео</div>
<svg class="a" style="left:92.8px;top:404.5px;" width="5" height="3" viewBox="0 0 5 3"><path d="M0.6 2.4 L2.5 0.6 L4.4 2.4" stroke="#e8ecf5" stroke-width="0.9" fill="none"/></svg>
<svg class="a" style="left:226.5px;top:400.5px;" width="11" height="11" viewBox="0 0 11 11"><circle cx="3.3" cy="2.4" r="1.8" stroke="#f2f4fa" stroke-width="0.95" fill="none"/><path d="M0.6 8.5 Q0.6 5.5 3.3 5.5 Q4.6 5.5 5.4 6.3" stroke="#f2f4fa" stroke-width="0.95" fill="none"/><circle cx="7.5" cy="5.2" r="1.6" stroke="#f2f4fa" stroke-width="0.95" fill="none"/><rect x="4.8" y="7.6" width="5.5" height="2.8" rx="1.4" stroke="#f2f4fa" stroke-width="0.95" fill="none"/></svg>
<div class="t" style="left:240.5px;top:402.8px;font-size:5.3px;color:#b9c3dc;font-weight:normal;font-family:'Liberation Sans';">40</div>
<div class="t" style="left:191.5px;top:416px;width:80px;text-align:center;font-size:5.95px;color:#f4f6fb;font-weight:bold">Участники</div>
<svg class="a" style="left:256.5px;top:404.5px;" width="5" height="3" viewBox="0 0 5 3"><path d="M0.6 2.4 L2.5 0.6 L4.4 2.4" stroke="#e8ecf5" stroke-width="0.9" fill="none"/></svg>
<svg class="a" style="left:282.5px;top:399.5px;" width="13" height="13" viewBox="0 0 13 13"><path d="M4.5 2.2 Q5 0.6 7 0.6 H10.3 Q12.3 0.6 12.3 2.6 V5.3 Q12.3 6.8 11 7.1" stroke="#f2f4fa" stroke-width="0.95" fill="none"/><rect x="0.7" y="2.8" width="9.6" height="6.8" rx="2" stroke="#f2f4fa" stroke-width="0.95" fill="none"/><path d="M2.8 9.4 L2.6 12 L5 9.5" stroke="#f2f4fa" stroke-width="0.95" fill="none"/><circle cx="3.6" cy="6.2" r="0.55" fill="#f2f4fa"/><circle cx="5.5" cy="6.2" r="0.55" fill="#f2f4fa"/><circle cx="7.4" cy="6.2" r="0.55" fill="#f2f4fa"/></svg>
<div class="t" style="left:249px;top:416px;width:80px;text-align:center;font-size:5.95px;color:#f4f6fb;font-weight:bold">Чат</div>
<svg class="a" style="left:303.7px;top:404.5px;" width="5" height="3" viewBox="0 0 5 3"><path d="M0.6 2.4 L2.5 0.6 L4.4 2.4" stroke="#e8ecf5" stroke-width="0.9" fill="none"/></svg>
<svg class="a" style="left:331.5px;top:400px;" width="14" height="12" viewBox="0 0 14 12"><path d="M7 10.8 Q1 7.3 1 4 Q1 1 3.8 1 Q5.8 1 7 2.9 Q8.2 1 10.2 1 Q13 1 13 4 Q13 7.3 7 10.8Z" stroke="#f2f4fa" stroke-width="1" fill="none" transform="rotate(-8 7 6)"/></svg>
<div class="t" style="left:298.7px;top:416px;width:80px;text-align:center;font-size:5.95px;color:#f4f6fb;font-weight:bold">Отреагировать</div>
<svg class="a" style="left:355.8px;top:404.5px;" width="5" height="3" viewBox="0 0 5 3"><path d="M0.6 2.4 L2.5 0.6 L4.4 2.4" stroke="#e8ecf5" stroke-width="0.9" fill="none"/></svg>
<svg class="a" style="left:383.5px;top:399.5px;" width="11" height="13" viewBox="0 0 11 13"><path d="M2.2 6.5 V2.3 Q2.2 1.2 3.2 1.2 Q4.2 1.2 4.2 2.3 V1.4 Q4.2 0.5 5.2 0.5 Q6.2 0.5 6.2 1.4 V2 Q6.2 1.1 7.2 1.1 Q8.2 1.1 8.2 2.1 V6.8 L9.2 5.6 Q10.2 4.8 10.5 5.9 L8.3 10.5 Q7.3 12.3 5.3 12.3 Q2.2 12.3 2.2 9.3 Z" stroke="#f2f4fa" stroke-width="0.95" fill="none"/><path d="M4.2 2.3 V6 M6.2 2 V6" stroke="#f2f4fa" stroke-width="0.6"/></svg>
<div class="t" style="left:349px;top:416px;width:80px;text-align:center;font-size:5.95px;color:#f4f6fb;font-weight:bold">Поднять руку</div>
<svg class="a" style="left:404.5px;top:404.5px;" width="5" height="3" viewBox="0 0 5 3"><path d="M0.6 2.4 L2.5 0.6 L4.4 2.4" stroke="#e8ecf5" stroke-width="0.9" fill="none"/></svg>
<div class="a" style="left:433px;top:400.8px;width:12.6px;height:10.2px;background:#1ed488;border-radius:2px"></div>
<svg class="a" style="left:435.5px;top:402px;" width="8" height="8" viewBox="0 0 8 8"><path d="M4 7.2 V2.8 M1.8 4.8 L4 2.3 L6.2 4.8" stroke="#0b2a55" stroke-width="1.4" fill="none"/></svg>
<div class="t" style="left:399.5px;top:416px;width:80px;text-align:center;font-size:5.95px;color:#f4f6fb;font-weight:bold">Поделиться</div>
<svg class="a" style="left:482.5px;top:399.5px;" width="13" height="13" viewBox="0 0 13 13"><path d="M5.5 2.5 Q6.2 6.6 10.2 7.3 Q6.2 8 5.5 12.2 Q4.8 8 0.8 7.3 Q4.8 6.6 5.5 2.5Z" fill="#dfe9f7"/><path d="M10.2 0.5 Q10.5 2 12 2.3 Q10.5 2.6 10.2 4.1 Q9.9 2.6 8.4 2.3 Q9.9 2 10.2 0.5Z" fill="#dfe9f7"/></svg>
<div class="t" style="left:449px;top:416px;width:80px;text-align:center;font-size:5.95px;color:#f4f6fb;font-weight:bold">AI Companion</div>
<svg class="a" style="left:530.5px;top:400px;" width="14" height="12" viewBox="0 0 14 12"><circle cx="10.2" cy="2.5" r="1.8" stroke="#f2f4fa" stroke-width="0.95" fill="none"/><circle cx="2.8" cy="9.5" r="1.8" stroke="#f2f4fa" stroke-width="0.95" fill="none"/><path d="M1 5.5 V3.3 Q1 1 3.3 1 H5.5 M12.2 6.5 V8.7 Q12.2 11 9.9 11 H7.7" stroke="#f2f4fa" stroke-width="0.95" fill="none"/></svg>
<div class="t" style="left:497px;top:416px;width:80px;text-align:center;font-size:5.95px;color:#f4f6fb;font-weight:bold">Приложения</div>
<svg class="a" style="left:574.5px;top:399.5px;" width="13" height="13" viewBox="0 0 13 13"><circle cx="6.5" cy="6.5" r="5.7" stroke="#f2f4fa" stroke-width="1" fill="none"/><circle cx="6.5" cy="6.5" r="2.4" fill="#f2f4fa"/></svg>
<div class="t" style="left:541px;top:416px;width:80px;text-align:center;font-size:5.95px;color:#f4f6fb;font-weight:bold">Запись</div>
<svg class="a" style="left:623px;top:399.5px;" width="13" height="13" viewBox="0 0 13 13"><circle cx="6.5" cy="6.5" r="5.7" stroke="#f2f4fa" stroke-width="1" fill="none"/><circle cx="4" cy="6.5" r="0.7" fill="#f2f4fa"/><circle cx="6.5" cy="6.5" r="0.7" fill="#f2f4fa"/><circle cx="9" cy="6.5" r="0.7" fill="#f2f4fa"/></svg>
<div class="t" style="left:589.5px;top:416px;width:80px;text-align:center;font-size:5.95px;color:#f4f6fb;font-weight:bold">Дополнительно</div>
<svg class="a" style="left:768px;top:399px;" width="15" height="13" viewBox="0 0 15 13"><path d="M8.5 1 H13.5 V12 H8.5 Z" stroke="#e0307a" stroke-width="1" fill="none"/><path d="M8.5 1 L11.5 0.3 V12.7 L8.5 12" stroke="#c02870" stroke-width="0.6" fill="none"/><circle cx="4.2" cy="2" r="1.5" stroke="#f2f4fa" stroke-width="0.85" fill="none"/><path d="M3 4.5 Q1.5 6.5 2.2 7.5 M4.5 4.2 L6 7.8 L8 8.2 M4 7.5 L2.5 11.5 M5.5 8.5 L6.5 11.8" stroke="#f2f4fa" stroke-width="0.9" fill="none"/></svg>
<div class="t" style="left:735px;top:416px;width:80px;text-align:center;font-size:5.95px;color:#f4f6fb;font-weight:bold">Выйти</div>
<div class="a" style="left:0px;top:424px;width:800px;height:26px;background:#eceef2;"></div>
<div class="a" style="left:0px;top:424px;width:800px;height:1.2px;background:#0a1640;"></div>
<svg class="a" style="left:255.5px;top:432px;" width="12" height="12" viewBox="0 0 12 12"><defs><linearGradient id="wg" x1="0" y1="0" x2="1" y2="1"><stop offset="0" stop-color="#3ab5f5"/><stop offset="1" stop-color="#0a70d0"/></linearGradient></defs><rect x="0" y="0" width="5.6" height="5.6" fill="url(#wg)"/><rect x="6.2" y="0" width="5.6" height="5.6" fill="url(#wg)"/><rect x="0" y="6.2" width="5.6" height="5.6" fill="url(#wg)"/><rect x="6.2" y="6.2" width="5.6" height="5.6" fill="url(#wg)"/></svg>
<div class="a" style="left:275.5px;top:430px;width:112.5px;height:15.5px;background:#fbfbfc;border-radius:8px;box-shadow:0 0 0 0.5px #dcdde2"></div>
<svg class="a" style="left:281.5px;top:434px;" width="8" height="8" viewBox="0 0 8 8"><circle cx="3.3" cy="3.3" r="2.6" stroke="#222" stroke-width="1" fill="none"/><line x1="5.2" y1="5.2" x2="7.3" y2="7.3" stroke="#222" stroke-width="1.1"/></svg>
<div class="t" style="left:294px;top:433.2px;font-size:7.3px;color:#4a4a4a;font-weight:normal;font-family:'Liberation Sans';">Пошук</div>
<div class="a" style="left:361px;top:431px;width:25.5px;height:13px;border-radius:50%;background:linear-gradient(#c9a37a,#d8a070 35%,#6a8a9a 60%,#3a8a6a 85%,#2a5a3a)"></div>
<div class="a" style="left:370px;top:432px;width:3px;height:11px;background:#d09a30;opacity:.8"></div>
<svg class="a" style="left:395px;top:432px;" width="13" height="12" viewBox="0 0 13 12"><rect x="4.5" y="0.5" width="7.5" height="7.5" fill="#bdbdbd"/><rect x="0.5" y="3" width="2.2" height="8.5" fill="#1a1a1a"/><rect x="0.5" y="9.3" width="8.5" height="2.2" fill="#1a1a1a"/></svg>
<svg class="a" style="left:418px;top:432px;" width="13" height="12" viewBox="0 0 13 12"><path d="M0.5 1.5 Q0.5 0.5 1.5 0.5 H5 L6.5 2 H11.5 Q12.5 2 12.5 3 V11 Q12.5 11.8 11.5 11.8 H1.5 Q0.5 11.8 0.5 11Z" fill="#f5c53a"/><rect x="2.3" y="7.5" width="8.4" height="3" rx="0.5" fill="#1d6fc4"/></svg>
<svg class="a" style="left:441px;top:431.5px;" width="13" height="13" viewBox="0 0 13 13"><defs><linearGradient id="cg1" x1="0" y1="0" x2="0" y2="1"><stop offset="0" stop-color="#2aa8f2"/><stop offset="0.6" stop-color="#3bc57a"/><stop offset="1" stop-color="#f2c53a"/></linearGradient><linearGradient id="cg2" x1="0" y1="0" x2="0" y2="1"><stop offset="0" stop-color="#c05ae0"/><stop offset="0.5" stop-color="#f0568a"/><stop offset="1" stop-color="#f5923a"/></linearGradient></defs><path d="M4.2 0.8 H7.5 Q8.8 0.8 8.3 2.2 L5.4 10.5 Q4.9 12 3.4 12 H1.6 Q0.2 12 0.6 10.6 L3 2.2 Q3.3 0.8 4.2 0.8Z" fill="url(#cg1)"/><path d="M8.8 12.2 H5.5 Q4.2 12.2 4.7 10.8 L7.6 2.5 Q8.1 1 9.6 1 H11.4 Q12.8 1 12.4 2.4 L10 10.8 Q9.7 12.2 8.8 12.2Z" fill="url(#cg2)"/></svg>
<svg class="a" style="left:463.5px;top:431.5px;" width="13" height="12" viewBox="0 0 13 12"><path d="M3.5 2.5 V1.5 Q3.5 0.5 6.5 0.5 Q9.5 0.5 9.5 1.5 V2.5" stroke="#2a6ac0" stroke-width="0.8" fill="none"/><rect x="0.5" y="2.5" width="12" height="9.3" rx="1.5" fill="#1d5aa8"/><rect x="4" y="5" width="2.2" height="2.2" fill="#f25022"/><rect x="6.7" y="5" width="2.2" height="2.2" fill="#7fba00"/><rect x="4" y="7.7" width="2.2" height="2.2" fill="#00a4ef"/><rect x="6.7" y="7.7" width="2.2" height="2.2" fill="#ffb900"/></svg>
<svg class="a" style="left:487px;top:431px;" width="13" height="13" viewBox="0 0 13 13"><circle cx="6.5" cy="6.5" r="6.2" fill="#db4437"/><path d="M6.5 6.5 L0.9 9.6 A6.2 6.2 0 0 0 9.6 11.9Z" fill="#0f9d58"/><path d="M6.5 6.5 L9.6 11.9 A6.2 6.2 0 0 0 12.3 4 L6.5 4Z" fill="#f4c20d"/><circle cx="6.5" cy="6.5" r="2.9" fill="#fff"/><circle cx="6.5" cy="6.5" r="2.3" fill="#4285f4"/></svg>
<div class="a" style="left:494px;top:428.8px;width:8.5px;height:8.5px;border-radius:50%;background:radial-gradient(circle at 50% 40%,#c9b070 0 1.5px,#3a6a2a 2.5px,#244a1a)"></div>
<div class="a" style="left:491.5px;top:445.8px;width:3.5px;height:1px;background:#7a7a7a;border-radius:1px"></div>
<svg class="a" style="left:510px;top:431px;" width="13" height="13" viewBox="0 0 13 13"><circle cx="6.5" cy="6.5" r="6.2" fill="#db4437"/><path d="M6.5 6.5 L0.9 9.6 A6.2 6.2 0 0 0 9.6 11.9Z" fill="#0f9d58"/><path d="M6.5 6.5 L9.6 11.9 A6.2 6.2 0 0 0 12.3 4 L6.5 4Z" fill="#f4c20d"/><circle cx="6.5" cy="6.5" r="2.9" fill="#fff"/><circle cx="6.5" cy="6.5" r="2.3" fill="#4285f4"/></svg>
<div class="a" style="left:517.5px;top:428.8px;width:8.5px;height:8.5px;border-radius:50%;background:radial-gradient(circle at 50% 45%,#d8b098 0 1.6px,#2a1a14 2.6px,#f0ece8 3.8px)"></div>
<div class="a" style="left:514.5px;top:445.8px;width:3.5px;height:1px;background:#7a7a7a;border-radius:1px"></div>
<div class="a" style="left:529.4px;top:427px;width:20px;height:20.7px;background:#f3c9c9;border-radius:2px;box-shadow:inset 0 0 0 0.5px #e8b0b0"></div>
<div class="a" style="left:533px;top:431px;width:11px;height:11.5px;border-radius:50%;background:#2e6ff2"></div>
<div class="t" style="left:534.6px;top:435.3px;font-size:2.9px;color:#fff;font-weight:bold;font-family:'Liberation Sans';">zoom</div>
<div class="a" style="left:533.8px;top:445.4px;width:10.6px;height:1.5px;background:#d42a2a;border-radius:1px"></div>
<svg class="a" style="left:634px;top:435px;" width="6" height="4.5" viewBox="0 0 6 4.5"><path d="M0.6 3.6 L3 1.1 L5.4 3.6" stroke="#222" stroke-width="0.9" fill="none"/></svg>
<svg class="a" style="left:648.5px;top:433.5px;" width="10" height="7.5" viewBox="0 0 10 7.5"><path d="M2.3 6.8 H8 Q9.5 6.8 9.5 5.2 Q9.5 3.7 8 3.6 Q7.5 0.8 5 0.8 Q2.8 0.8 2.2 3.2 Q0.5 3.5 0.5 5.1 Q0.5 6.8 2.3 6.8Z" stroke="#444" stroke-width="0.8" fill="none"/><path d="M1.2 5.5 Q3 3.5 6 4.5 Q8 5 9 5.5" stroke="#888" stroke-width="0.6" fill="none"/></svg>
<svg class="a" style="left:664.5px;top:432.5px;" width="12" height="11" viewBox="0 0 12 11"><rect x="1.3" y="0.5" width="2.2" height="4.5" rx="1.1" stroke="#3a6cc0" stroke-width="0.8" fill="none"/><path d="M0.5 4 Q0.5 6.5 2.4 6.5 Q4.3 6.5 4.3 4 M2.4 6.5 V7.5" stroke="#3a6cc0" stroke-width="0.7" fill="none"/><path d="M6 7 L11 4 L9.5 10 L8.3 7.8Z" stroke="#3a6cc0" stroke-width="0.7" fill="none"/></svg>
<div class="t" style="left:684.7px;top:435px;font-size:5.6px;color:#2a2a2a;font-weight:normal;font-family:'Liberation Sans';">УКР</div>
<svg class="a" style="left:705.5px;top:433.8px;" width="9" height="7" viewBox="0 0 9 7"><path d="M0.5 2.5 Q4.5 -1 8.5 2.5 M1.8 4 Q4.5 1.5 7.2 4 M3 5.4 Q4.5 4.3 6 5.4" stroke="#333" stroke-width="0.8" fill="none"/><circle cx="4.5" cy="6.4" r="0.5" fill="#333"/></svg>
<svg class="a" style="left:718px;top:433px;" width="10" height="9" viewBox="0 0 10 9"><path d="M0.5 3 H2.5 L5 0.8 V8.2 L2.5 6 H0.5Z" stroke="#333" stroke-width="0.75" fill="none"/><path d="M6.5 2.8 Q7.5 4.5 6.5 6.2 M8 1.5 Q9.6 4.5 8 7.5" stroke="#333" stroke-width="0.75" fill="none"/></svg>
<svg class="a" style="left:731px;top:433.8px;" width="9" height="7" viewBox="0 0 9 7"><rect x="0.5" y="1.5" width="7" height="4.5" rx="0.6" fill="#222"/><rect x="7.6" y="2.7" width="1" height="2" fill="#222"/><path d="M3 0.5 L2 3.5 H4 L3 6.5" stroke="#eceef2" stroke-width="0.6" fill="none"/></svg>
<div class="t" style="left:762.5px;top:430.6px;font-size:5.8px;color:#1a1a1a;font-weight:normal;font-family:'Liberation Sans';transform:scaleY(1.12)">14:46</div>
<div class="t" style="left:748.5px;top:439.4px;font-size:5.8px;color:#1a1a1a;font-weight:normal;font-family:'Liberation Sans';transform:scaleY(1.12)">13.02.2026</div>
<svg class="a" style="left:782px;top:432.5px;" width="9" height="10" viewBox="0 0 9 10"><path d="M4.5 1 Q7.5 1 7.5 4.5 V6.5 L8.5 7.8 H0.5 L1.5 6.5 V4.5 Q1.5 1 4.5 1Z M3.3 8.5 Q4.5 9.8 5.7 8.5" stroke="#333" stroke-width="0.75" fill="none"/></svg>
</body></html>
